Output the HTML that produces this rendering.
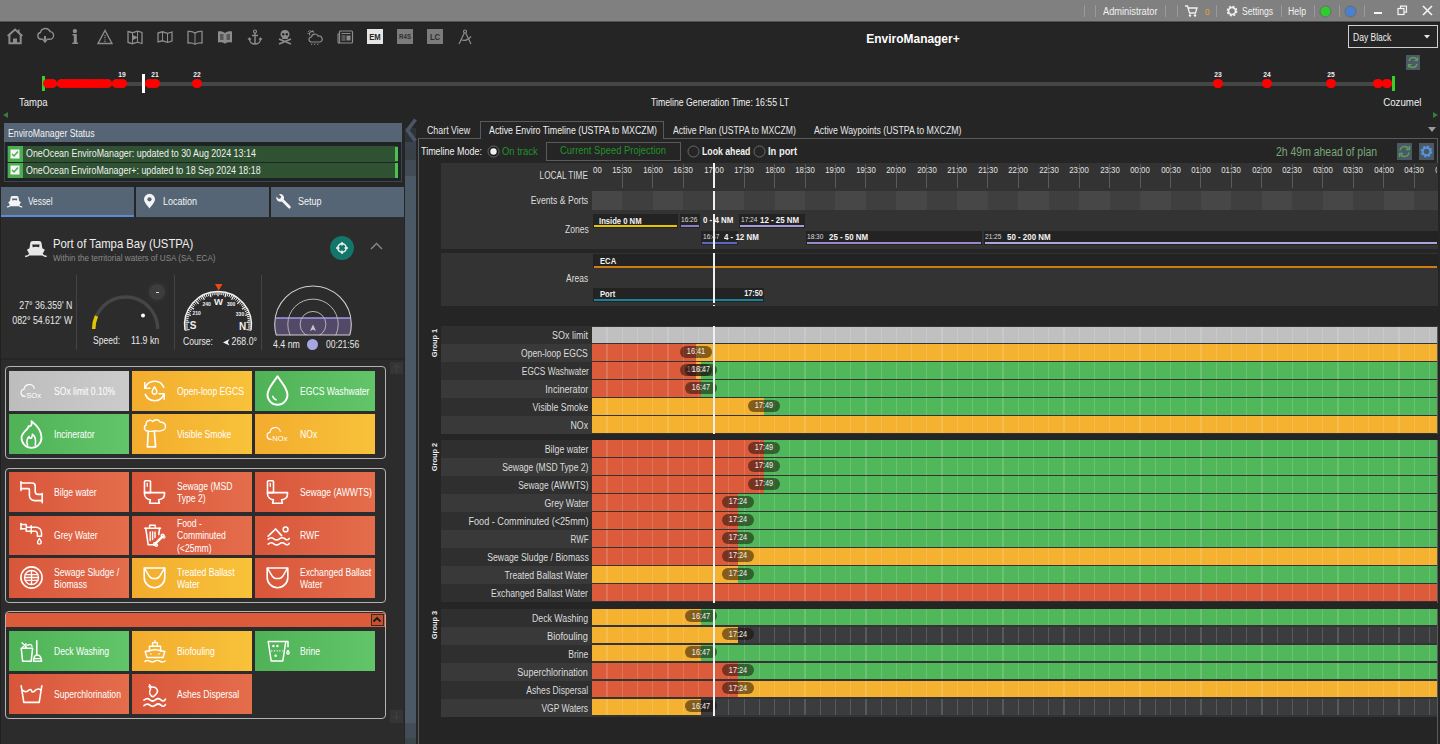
<!DOCTYPE html><html><head><meta charset="utf-8"><style>
html,body{margin:0;padding:0;width:1440px;height:744px;overflow:hidden;background:#252525;font-family:"Liberation Sans",sans-serif;}
.b{position:absolute;}
.t{position:absolute;white-space:nowrap;}
svg{overflow:visible}
</style></head><body>
<div class="b" style="left:0px;top:0px;width:1440px;height:21px;background:#808080;"></div>
<div class="b" style="left:0px;top:21px;width:1440px;height:1px;background:#545454;"></div>
<div class="b" style="left:0px;top:22px;width:1440px;height:1px;background:#1f1f1f;"></div>
<div class="b" style="left:1084px;top:5px;width:1px;height:12px;background:#9a9a9a;"></div>
<div class="b" style="left:1095px;top:5px;width:1px;height:12px;background:#9a9a9a;"></div>
<div class="b" style="left:1165px;top:5px;width:1px;height:12px;background:#9a9a9a;"></div>
<div class="b" style="left:1177px;top:5px;width:1px;height:12px;background:#9a9a9a;"></div>
<div class="b" style="left:1216px;top:5px;width:1px;height:12px;background:#9a9a9a;"></div>
<div class="b" style="left:1281px;top:5px;width:1px;height:12px;background:#9a9a9a;"></div>
<div class="b" style="left:1314px;top:5px;width:1px;height:12px;background:#9a9a9a;"></div>
<div class="b" style="left:1339px;top:5px;width:1px;height:12px;background:#9a9a9a;"></div>
<div class="b" style="left:1364px;top:5px;width:1px;height:12px;background:#9a9a9a;"></div>
<div class="t" style="left:1103px;top:4.5px;font-size:10px;line-height:14px;color:#f0f0f0;font-weight:400;transform-origin:left center;transform:scaleX(0.9252);">Administrator</div>
<div class="t" style="left:1205px;top:5.5px;font-size:9px;line-height:12px;color:#f0a030;font-weight:400;transform-origin:left center;transform:scaleX(0.9);">0</div>
<div class="t" style="left:1242px;top:4.5px;font-size:10px;line-height:14px;color:#f0f0f0;font-weight:400;transform-origin:left center;transform:scaleX(0.858);">Settings</div>
<div class="t" style="left:1288px;top:4.5px;font-size:10px;line-height:14px;color:#f0f0f0;font-weight:400;transform-origin:left center;transform:scaleX(0.8752);">Help</div>
<svg class="b" style="left:1184px;top:4px;" width="14" height="14" viewBox="0 0 14 14"><path d="M1 2h2.5l2 7h6l1.5-5H4.5" fill="none" stroke="#f0f0f0" stroke-width="1.3"/><circle cx="6" cy="11.5" r="1.2" fill="#f0f0f0"/><circle cx="11" cy="11.5" r="1.2" fill="#f0f0f0"/></svg>
<svg class="b" style="left:1225px;top:4px;" width="14" height="14" viewBox="0 0 14 14"><circle cx="7" cy="7" r="4.2" fill="none" stroke="#f0f0f0" stroke-width="2.4" stroke-dasharray="1.9 1.4"/><circle cx="7" cy="7" r="3.5" fill="none" stroke="#f0f0f0" stroke-width="1.6"/></svg>
<svg class="b" style="left:1319px;top:5px;" width="13" height="13" viewBox="0 0 13 13"><circle cx="6.5" cy="6.5" r="5.5" fill="#2ecc2e" stroke="#6a6a6a" stroke-width="1"/></svg>
<svg class="b" style="left:1344px;top:5px;" width="13" height="13" viewBox="0 0 13 13"><circle cx="6.5" cy="6.5" r="5.5" fill="#4a80d0" stroke="#6a6a6a" stroke-width="1"/></svg>
<div class="b" style="left:1374px;top:12px;width:8px;height:2px;background:#f4f4f4;"></div>
<svg class="b" style="left:1397px;top:5px;" width="11" height="11" viewBox="0 0 11 11"><rect x="1" y="3.5" width="6" height="6" fill="none" stroke="#f4f4f4" stroke-width="1.2"/><path d="M3.5 3.5V1.2h6v6H7" fill="none" stroke="#f4f4f4" stroke-width="1.2"/></svg>
<svg class="b" style="left:1422px;top:5px;" width="11" height="11" viewBox="0 0 11 11"><path d="M1 1L10 10M10 1L1 10" stroke="#f4f4f4" stroke-width="1.6"/></svg>
<svg class="b" style="left:4px;top:26px;" width="24" height="22" viewBox="0 0 24 22"><path d="M3.7 10L11.1 3.6L18.3 10" fill="none" stroke="#8c8c8c" stroke-width="2"/><path d="M5.4 9V17.2H16.7V9" fill="none" stroke="#8c8c8c" stroke-width="2"/><rect x="9" y="12.5" width="4" height="5" fill="#8c8c8c"/><path d="M14.8 3.6V7.2" stroke="#8c8c8c" stroke-width="1.5"/></svg>
<svg class="b" style="left:34px;top:26px;" width="22" height="22" viewBox="0 0 22 22"><path d="M9.5 13.2H7.2A3.4 3.4 0 0 1 6.4 6.5A5.2 5.2 0 0 1 16.2 5.6A3.5 3.5 0 0 1 15.4 13.2H12.5" fill="none" stroke="#8c8c8c" stroke-width="1.4"/><path d="M11 10v5" stroke="#8c8c8c" stroke-width="2"/><path d="M8.3 13.8L11 17.2L13.7 13.8z" fill="#8c8c8c"/></svg>
<svg class="b" style="left:68px;top:26px;" width="14" height="22" viewBox="0 0 14 22"><circle cx="6.9" cy="5.1" r="2.2" fill="#8c8c8c"/><path d="M4.5 8h4.3v8.6h1.2V18H4.3v-1.4h1.5V9.4H4.5z" fill="#8c8c8c"/></svg>
<svg class="b" style="left:97px;top:29px;" width="16" height="16" viewBox="0 0 16 16"><path d="M8 1.5L1 14.5h14z" fill="none" stroke="#8c8c8c" stroke-width="1.4"/><path d="M8 6v4.5" stroke="#8c8c8c" stroke-width="1.2" stroke-dasharray="1.3 .7"/><circle cx="8" cy="12.3" r=".8" fill="#8c8c8c"/></svg>
<svg class="b" style="left:127px;top:29px;" width="16" height="16" viewBox="0 0 16 16"><path d="M1 2.5l4.5 1.2 5-1.5 4.5 1.3v11l-4.5-1.3-5 1.5L1 13.5z" fill="none" stroke="#8c8c8c" stroke-width="1.3"/><path d="M5.5 3.7v10.6M10.5 2.2v10.6" stroke="#8c8c8c" stroke-width="1"/><path d="M5 5.5l6 3-6 3z" fill="#8c8c8c"/></svg>
<svg class="b" style="left:157px;top:29px;" width="16" height="16" viewBox="0 0 16 16"><path d="M1 4l4.5-1.2 5 1.5L15 3v9l-4.5 1.3-5-1.5L1 13z" fill="none" stroke="#8c8c8c" stroke-width="1.3"/><path d="M5.5 2.8v9M10.5 4.3v9" stroke="#8c8c8c" stroke-width="1"/></svg>
<svg class="b" style="left:187px;top:29px;" width="16" height="16" viewBox="0 0 16 16"><path d="M1 2.5c2.5-.5 5 0 7 1.5 2-1.5 4.5-2 7-1.5V14c-2.5-.5-5 0-7 1.2C6 14 3.5 13.5 1 14z" fill="none" stroke="#8c8c8c" stroke-width="1.3"/><path d="M8 4v11" stroke="#8c8c8c" stroke-width="1"/></svg>
<svg class="b" style="left:217px;top:29px;" width="16" height="16" viewBox="0 0 16 16"><path d="M1 2.5c2.5-.5 5 0 7 1.5 2-1.5 4.5-2 7-1.5V13.5c-2.5-.5-5 0-7 1.2C6 13.5 3.5 13 1 13.5z" fill="#8c8c8c"/><path d="M3 6h3.5M3 8h3.5M3 10h3.5M9.5 6H13M9.5 8H13M9.5 10H13" stroke="#252525" stroke-width="1"/></svg>
<svg class="b" style="left:248px;top:29px;" width="14" height="16" viewBox="0 0 14 16"><circle cx="7" cy="2.5" r="1.5" fill="none" stroke="#8c8c8c" stroke-width="1.2"/><path d="M7 4v11M4 6.5h6M1.5 10c0 3 2.5 5 5.5 5s5.5-2 5.5-5" fill="none" stroke="#8c8c8c" stroke-width="1.4"/><path d="M0 10.5l1.5-1.5 1.5 1.5M11 10.5l1.5-1.5 1.5 1.5" fill="none" stroke="#8c8c8c" stroke-width="1.2"/></svg>
<svg class="b" style="left:278px;top:29px;" width="14" height="16" viewBox="0 0 14 16"><path d="M7 1C4 1 2.5 3 2.5 5.3c0 1.5.8 2.6 1.7 3.2v1.5h5.6V8.5c.9-.6 1.7-1.7 1.7-3.2C11.5 3 10 1 7 1z" fill="#8c8c8c"/><circle cx="5.2" cy="5.2" r="1.2" fill="#252525"/><circle cx="8.8" cy="5.2" r="1.2" fill="#252525"/><path d="M1 10l12 5M13 10L1 15" stroke="#8c8c8c" stroke-width="1.8"/></svg>
<svg class="b" style="left:307px;top:29px;" width="16" height="16" viewBox="0 0 16 16"><path d="M4.5 13a2.5 2.5 0 0 1 0-5 3.5 3.5 0 0 1 6.7-.8A2.5 2.5 0 0 1 13 13z" fill="none" stroke="#8c8c8c" stroke-width="1.2"/><path d="M3 6.5a2.5 2.5 0 0 1 4-3" fill="none" stroke="#8c8c8c" stroke-width="1.1"/><path d="M3 1v1.2M0.5 4.5h1.2M1 2l1 .8M5.8 1.3l-.6 1" stroke="#8c8c8c" stroke-width="1"/><path d="M5 14.5l-.5 1.5M8 14.5l-.5 1.5M11 14.5l-.5 1.5" stroke="#8c8c8c" stroke-width="1"/></svg>
<svg class="b" style="left:337px;top:29px;" width="16" height="16" viewBox="0 0 16 16"><rect x="2.5" y="2" width="13" height="12" rx="1" fill="none" stroke="#8c8c8c" stroke-width="1.2"/><path d="M2.5 5H1v8a1 1 0 0 0 1.5 1" fill="none" stroke="#8c8c8c" stroke-width="1.1"/><path d="M4.5 4.5h9M4.5 7h4M4.5 9h4M4.5 11h4" stroke="#8c8c8c" stroke-width="1"/><rect x="9.5" y="6.5" width="4" height="5" fill="#8c8c8c"/></svg>
<div class="b" style="left:367px;top:29px;width:16px;height:15px;background:#e6e6e6;"></div>
<div class="t" style="left:375px;top:31.0px;font-size:9px;line-height:12px;color:#262626;font-weight:700;transform-origin:center center;transform:translateX(-50%) scaleX(0.85);">EM</div>
<div class="b" style="left:397px;top:29px;width:16px;height:15px;background:#7c7c7c;"></div>
<div class="t" style="left:405px;top:32.0px;font-size:7.5px;line-height:10px;color:#2e2e2e;font-weight:700;transform-origin:center center;transform:translateX(-50%) scaleX(0.82);">R4S</div>
<div class="b" style="left:427px;top:29px;width:16px;height:15px;background:#7c7c7c;"></div>
<div class="t" style="left:435px;top:31.0px;font-size:9px;line-height:12px;color:#2e2e2e;font-weight:700;transform-origin:center center;transform:translateX(-50%) scaleX(0.85);">LC</div>
<svg class="b" style="left:458px;top:29px;" width="14" height="16" viewBox="0 0 14 16"><circle cx="7" cy="2.5" r="1.5" fill="none" stroke="#8c8c8c" stroke-width="1.2"/><path d="M6.3 4L1 15M7.7 4L13 15M3 10.5c2.5 1.5 6 1.5 10-3" fill="none" stroke="#8c8c8c" stroke-width="1.2"/></svg>
<div class="t" style="left:912.5px;top:30.5px;font-size:12px;line-height:16px;color:#ffffff;font-weight:700;transform-origin:center center;transform:translateX(-50%) scaleX(0.9958);">EnviroManager+</div>
<div class="b" style="left:1348px;top:25px;width:88px;height:21px;background:transparent;border:1px solid #d0d0d0;"></div>
<div class="t" style="left:1353px;top:31.0px;font-size:10px;line-height:14px;color:#f0f0f0;font-weight:400;transform-origin:left center;transform:scaleX(0.8508);">Day Black</div>
<svg class="b" style="left:1424px;top:35px;" width="7" height="4" viewBox="0 0 7 4"><path d="M0 0h6l-3 3.5z" fill="#e8e8e8"/></svg>
<div class="b" style="left:1406px;top:55px;width:14px;height:15px;background:#4d5a66;"></div>
<svg class="b" style="left:1406px;top:55px;" width="14" height="15" viewBox="0 0 14 15"><path d="M3 6a4.3 4.3 0 0 1 7.8-1.5M11 9a4.3 4.3 0 0 1-7.8 1.5" fill="none" stroke="#5ea05e" stroke-width="1.4"/><path d="M11.5 2.5v3h-3M2.5 12.5v-3h3" fill="none" stroke="#5ea05e" stroke-width="1.2"/></svg>
<div class="b" style="left:44px;top:82px;width:1350px;height:4px;background:#454545;"></div>
<div class="b" style="left:42px;top:76px;width:3px;height:15px;background:#3ccc2c;"></div>
<div class="b" style="left:1392px;top:76px;width:3px;height:15px;background:#3ccc2c;"></div>
<div class="b" style="left:43.25px;top:78.75px;width:9.5px;height:9.5px;border-radius:50%;background:#ff0000"></div>
<div class="b" style="left:47.25px;top:78.75px;width:9.5px;height:9.5px;border-radius:50%;background:#ff0000"></div>
<div class="b" style="left:57.25px;top:78.75px;width:9.5px;height:9.5px;border-radius:50%;background:#ff0000"></div>
<div class="b" style="left:62.25px;top:78.75px;width:9.5px;height:9.5px;border-radius:50%;background:#ff0000"></div>
<div class="b" style="left:67.25px;top:78.75px;width:9.5px;height:9.5px;border-radius:50%;background:#ff0000"></div>
<div class="b" style="left:72.25px;top:78.75px;width:9.5px;height:9.5px;border-radius:50%;background:#ff0000"></div>
<div class="b" style="left:77.25px;top:78.75px;width:9.5px;height:9.5px;border-radius:50%;background:#ff0000"></div>
<div class="b" style="left:82.25px;top:78.75px;width:9.5px;height:9.5px;border-radius:50%;background:#ff0000"></div>
<div class="b" style="left:87.25px;top:78.75px;width:9.5px;height:9.5px;border-radius:50%;background:#ff0000"></div>
<div class="b" style="left:92.25px;top:78.75px;width:9.5px;height:9.5px;border-radius:50%;background:#ff0000"></div>
<div class="b" style="left:97.25px;top:78.75px;width:9.5px;height:9.5px;border-radius:50%;background:#ff0000"></div>
<div class="b" style="left:102.25px;top:78.75px;width:9.5px;height:9.5px;border-radius:50%;background:#ff0000"></div>
<div class="b" style="left:112.25px;top:78.75px;width:9.5px;height:9.5px;border-radius:50%;background:#ff0000"></div>
<div class="b" style="left:117.25px;top:78.75px;width:9.5px;height:9.5px;border-radius:50%;background:#ff0000"></div>
<div class="b" style="left:145.25px;top:78.75px;width:9.5px;height:9.5px;border-radius:50%;background:#ff0000"></div>
<div class="b" style="left:150.25px;top:78.75px;width:9.5px;height:9.5px;border-radius:50%;background:#ff0000"></div>
<div class="b" style="left:192.25px;top:78.75px;width:9.5px;height:9.5px;border-radius:50%;background:#ff0000"></div>
<div class="b" style="left:1213.25px;top:78.75px;width:9.5px;height:9.5px;border-radius:50%;background:#ff0000"></div>
<div class="b" style="left:1262.25px;top:78.75px;width:9.5px;height:9.5px;border-radius:50%;background:#ff0000"></div>
<div class="b" style="left:1326.25px;top:78.75px;width:9.5px;height:9.5px;border-radius:50%;background:#ff0000"></div>
<div class="b" style="left:1373.25px;top:78.75px;width:9.5px;height:9.5px;border-radius:50%;background:#ff0000"></div>
<div class="b" style="left:1382.25px;top:78.75px;width:9.5px;height:9.5px;border-radius:50%;background:#ff0000"></div>
<div class="b" style="left:142px;top:74px;width:3px;height:19px;background:#ffffff;"></div>
<div class="t" style="left:122px;top:70.0px;font-size:7px;line-height:9px;color:#f0f0f0;font-weight:700;transform-origin:center center;transform:translateX(-50%) scaleX(0.95);">19</div>
<div class="t" style="left:155px;top:70.0px;font-size:7px;line-height:9px;color:#f0f0f0;font-weight:700;transform-origin:center center;transform:translateX(-50%) scaleX(0.95);">21</div>
<div class="t" style="left:197px;top:70.0px;font-size:7px;line-height:9px;color:#f0f0f0;font-weight:700;transform-origin:center center;transform:translateX(-50%) scaleX(0.95);">22</div>
<div class="t" style="left:1218px;top:70.0px;font-size:7px;line-height:9px;color:#f0f0f0;font-weight:700;transform-origin:center center;transform:translateX(-50%) scaleX(0.95);">23</div>
<div class="t" style="left:1267px;top:70.0px;font-size:7px;line-height:9px;color:#f0f0f0;font-weight:700;transform-origin:center center;transform:translateX(-50%) scaleX(0.95);">24</div>
<div class="t" style="left:1331px;top:70.0px;font-size:7px;line-height:9px;color:#f0f0f0;font-weight:700;transform-origin:center center;transform:translateX(-50%) scaleX(0.95);">25</div>
<div class="t" style="left:19px;top:95.5px;font-size:10px;line-height:14px;color:#f0f0f0;font-weight:400;transform-origin:left center;transform:scaleX(0.9496);">Tampa</div>
<div class="t" style="right:19px;top:95.5px;font-size:10px;line-height:14px;color:#f0f0f0;font-weight:400;transform-origin:right center;transform:scaleX(0.9707);">Cozumel</div>
<div class="t" style="left:720px;top:95.5px;font-size:10px;line-height:14px;color:#f0f0f0;font-weight:400;transform-origin:center center;transform:translateX(-50%) scaleX(0.8712);">Timeline Generation Time: 16:55 LT</div>
<svg class="b" style="left:3px;top:112px;" width="6" height="7" viewBox="0 0 6 7"><path d="M5 0v6L0 3z" fill="#3a7a3a"/></svg>
<svg class="b" style="left:1433px;top:112px;" width="6" height="7" viewBox="0 0 6 7"><path d="M0 0v6l5-3z" fill="#3a7a3a"/></svg>
<div class="b" style="left:1px;top:217px;width:403px;height:527px;background:#2c2c2c;"></div>
<div class="b" style="left:0px;top:217px;width:1px;height:527px;background:#202020;"></div>
<div class="b" style="left:4px;top:123px;width:398px;height:59px;background:#1f2326;box-sizing:border-box;border:1px solid #3c4650;"></div>
<div class="b" style="left:4px;top:123px;width:398px;height:19px;background:#556576;"></div>
<div class="t" style="left:7.7px;top:126.5px;font-size:10px;line-height:14px;color:#f2f2f2;font-weight:400;transform-origin:left center;transform:scaleX(0.8743);">EnviroManager Status</div>
<div class="b" style="left:7px;top:146px;width:391px;height:15.5px;background:#2f5232;"></div>
<div class="b" style="left:7.5px;top:146px;width:15.5px;height:15.5px;background:#4cad50;"></div>
<div class="b" style="left:395px;top:146.5px;width:3px;height:14.5px;background:#4cc050;"></div>
<svg class="b" style="left:10px;top:148.5px;" width="10" height="10" viewBox="0 0 10 10"><rect x=".5" y=".5" width="9" height="9" fill="#f4f4f4"/><path d="M2 5l2 2 4-4.5" fill="none" stroke="#4cad50" stroke-width="1.4"/></svg>
<div class="t" style="left:26.2px;top:147.0px;font-size:10px;line-height:14px;color:#f0f0f0;font-weight:400;transform-origin:left center;transform:scaleX(0.889);">OneOcean EnviroManager: updated to 30 Aug 2024 13:14</div>
<div class="b" style="left:7px;top:162.5px;width:391px;height:15.5px;background:#2f5232;"></div>
<div class="b" style="left:7.5px;top:162.5px;width:15.5px;height:15.5px;background:#4cad50;"></div>
<div class="b" style="left:395px;top:163.0px;width:3px;height:14.5px;background:#4cc050;"></div>
<svg class="b" style="left:10px;top:165.0px;" width="10" height="10" viewBox="0 0 10 10"><rect x=".5" y=".5" width="9" height="9" fill="#f4f4f4"/><path d="M2 5l2 2 4-4.5" fill="none" stroke="#4cad50" stroke-width="1.4"/></svg>
<div class="t" style="left:26.2px;top:163.5px;font-size:10px;line-height:14px;color:#f0f0f0;font-weight:400;transform-origin:left center;transform:scaleX(0.8856);">OneOcean EnviroManager+: updated to 18 Sep 2024 18:18</div>
<div class="b" style="left:1px;top:187px;width:133px;height:30px;background:#556576;"></div>
<div class="b" style="left:136px;top:187px;width:133px;height:30px;background:#556576;"></div>
<div class="b" style="left:271px;top:187px;width:133px;height:30px;background:#556576;"></div>
<div class="b" style="left:1px;top:214.5px;width:133px;height:2.5px;background:#5b8ad8;"></div>
<svg class="b" style="left:6.8px;top:194.5px;" width="15.2" height="13" viewBox="0 0 22 18"><path d="M5 4.5Q5 1 8 1H14Q17 1 17 4.5L17.6 8.4L20.2 10L17 16H5L1.8 10L4.4 8.4Z" fill="#f4f4f4"/><path d="M7.2 4.6H14.8L14.3 7.4Q11 6.6 7.7 7.4Z" fill="#556576"/><path d="M.6 16.8Q3.2 16.8 5.2 14.2M21.4 16.8Q18.8 16.8 16.8 14.2" fill="none" stroke="#f4f4f4" stroke-width="1.7" stroke-linecap="round"/></svg>
<div class="t" style="left:27.6px;top:195.0px;font-size:10px;line-height:14px;color:#f4f4f4;font-weight:400;transform-origin:left center;transform:scaleX(0.835);">Vessel</div>
<svg class="b" style="left:143px;top:194px;" width="13" height="15" viewBox="0 0 13 15"><path d="M6.5 14.5C3 10 1 7.5 1 5.3a5.5 5.5 0 0 1 11 0c0 2.2-2 4.7-5.5 9.2z" fill="#f4f4f4"/><circle cx="6.5" cy="5.3" r="2.1" fill="#556576"/></svg>
<div class="t" style="left:163px;top:195.0px;font-size:10px;line-height:14px;color:#f4f4f4;font-weight:400;transform-origin:left center;transform:scaleX(0.8994);">Location</div>
<svg class="b" style="left:276px;top:193px;" width="16" height="16" viewBox="0 0 16 16"><path d="M14.5 13.2L7.8 6.5a4 4 0 0 0-4.9-5.3l2.3 2.3-.6 1.8-1.8.6-2.3-2.3a4 4 0 0 0 5.3 4.9l6.7 6.7a1.3 1.3 0 0 0 1.8-2z" fill="#f4f4f4"/></svg>
<div class="t" style="left:297.6px;top:195.0px;font-size:10px;line-height:14px;color:#f4f4f4;font-weight:400;transform-origin:left center;transform:scaleX(0.8955);">Setup</div>
<div class="b" style="left:1px;top:358px;width:403px;height:2px;background:#262626;"></div>
<svg class="b" style="left:25.2px;top:239.5px;" width="21.8" height="17.5" viewBox="0 0 22 18"><path d="M5 4.5Q5 1 8 1H14Q17 1 17 4.5L17.6 8.4L20.2 10L17 16H5L1.8 10L4.4 8.4Z" fill="#e8e8e8"/><path d="M7.2 4.6H14.8L14.3 7.4Q11 6.6 7.7 7.4Z" fill="#2c2c2c"/><path d="M.6 16.8Q3.2 16.8 5.2 14.2M21.4 16.8Q18.8 16.8 16.8 14.2" fill="none" stroke="#e8e8e8" stroke-width="1.7" stroke-linecap="round"/></svg>
<div class="t" style="left:52.7px;top:234.5px;font-size:13px;line-height:18px;color:#eeeeee;font-weight:400;transform-origin:left center;transform:scaleX(0.8696);">Port of Tampa Bay (USTPA)</div>
<div class="t" style="left:52.7px;top:252.0px;font-size:9px;line-height:12px;color:#8a8a8a;font-weight:400;transform-origin:left center;transform:scaleX(0.8975);">Within the territorial waters of USA (SA, ECA)</div>
<div class="b" style="left:330px;top:236px;width:24px;height:24px;border-radius:50%;background:#13766a"></div>
<svg class="b" style="left:334px;top:240px;" width="16" height="16" viewBox="0 0 16 16"><circle cx="8" cy="8" r="4.2" fill="none" stroke="#f4f4f4" stroke-width="1.5"/><path d="M8 2v3.5M8 10.5V14M2 8h3.5M10.5 8H14" stroke="#f4f4f4" stroke-width="1.5"/></svg>
<svg class="b" style="left:370px;top:242px;" width="13" height="8" viewBox="0 0 13 8"><path d="M1 7l5.5-5.5L12 7" fill="none" stroke="#8a8a8a" stroke-width="1.4"/></svg>
<div class="b" style="left:76px;top:275px;width:1px;height:75px;background:#444444;"></div>
<div class="b" style="left:174px;top:275px;width:1px;height:75px;background:#444444;"></div>
<div class="b" style="left:261px;top:275px;width:1px;height:75px;background:#444444;"></div>
<div class="t" style="right:1367.5px;top:298.5px;font-size:10px;line-height:14px;color:#e8e8e8;font-weight:400;transform-origin:right center;transform:scaleX(0.8793);">27° 36.359&#x27; N</div>
<div class="t" style="right:1367.5px;top:313.5px;font-size:10px;line-height:14px;color:#e8e8e8;font-weight:400;transform-origin:right center;transform:scaleX(0.8787);">082° 54.612&#x27; W</div>
<svg class="b" style="left:84px;top:286px;" width="84" height="50" viewBox="0 0 84 50"><path d="M9.7 43A32 32 0 0 1 73.7 43" fill="none" stroke="#464646" stroke-width="3.5"/><path d="M9.7 43A32 32 0 0 1 12.47 30" fill="none" stroke="#e6c400" stroke-width="3.5"/><circle cx="59" cy="29.5" r="2" fill="#ffffff"/></svg>
<div class="b" style="left:149px;top:284px;width:16px;height:16px;border-radius:50%;background:#3d3d3d;box-shadow:0 0 0 3px #2f2f2f"></div>
<div class="b" style="left:155.5px;top:291.5px;width:3.5px;height:1.5px;background:#d8d8d8;"></div>
<div class="t" style="left:92.6px;top:333.5px;font-size:10px;line-height:14px;color:#e8e8e8;font-weight:400;transform-origin:left center;transform:scaleX(0.8519);">Speed:</div>
<div class="t" style="left:130.8px;top:333.5px;font-size:10px;line-height:14px;color:#e8e8e8;font-weight:400;transform-origin:left center;transform:scaleX(0.8797);">11.9 kn</div>
<svg class="b" style="left:184px;top:290px;" width="68" height="44" viewBox="0 0 68 44"><path d="M0.91 40.24A33.5 33.5 0 1 1 67.09 40.24" fill="none" stroke="#f0f0f0" stroke-width="1.3"/><line x1="0.91" y1="40.24" x2="5.65" y2="39.49" stroke="#f4f4f4" stroke-width="1.2"/><line x1="0.65" y1="38.19" x2="4.04" y2="37.87" stroke="#f4f4f4" stroke-width="1.0"/><line x1="0.52" y1="36.13" x2="3.92" y2="36.01" stroke="#f4f4f4" stroke-width="1.0"/><line x1="0.51" y1="34.06" x2="3.91" y2="34.16" stroke="#f4f4f4" stroke-width="1.0"/><line x1="0.63" y1="32.00" x2="5.42" y2="32.43" stroke="#f4f4f4" stroke-width="1.2"/><line x1="0.88" y1="29.95" x2="4.24" y2="30.46" stroke="#f4f4f4" stroke-width="1.0"/><line x1="1.26" y1="27.91" x2="4.58" y2="28.63" stroke="#f4f4f4" stroke-width="1.0"/><line x1="1.76" y1="25.91" x2="5.03" y2="26.83" stroke="#f4f4f4" stroke-width="1.0"/><line x1="2.38" y1="23.94" x2="6.91" y2="25.52" stroke="#f4f4f4" stroke-width="1.2"/><line x1="3.12" y1="22.01" x2="6.26" y2="23.33" stroke="#f4f4f4" stroke-width="1.0"/><line x1="3.98" y1="20.13" x2="7.03" y2="21.64" stroke="#f4f4f4" stroke-width="1.0"/><line x1="4.96" y1="18.30" x2="7.90" y2="20.00" stroke="#f4f4f4" stroke-width="1.0"/><line x1="6.04" y1="16.54" x2="10.05" y2="19.19" stroke="#f4f4f4" stroke-width="1.2"/><line x1="7.23" y1="14.86" x2="9.95" y2="16.90" stroke="#f4f4f4" stroke-width="1.0"/><line x1="8.53" y1="13.24" x2="11.11" y2="15.45" stroke="#f4f4f4" stroke-width="1.0"/><line x1="9.92" y1="11.71" x2="12.36" y2="14.08" stroke="#f4f4f4" stroke-width="1.0"/><line x1="11.40" y1="10.27" x2="14.64" y2="13.82" stroke="#f4f4f4" stroke-width="1.2"/><line x1="12.97" y1="8.93" x2="15.10" y2="11.57" stroke="#f4f4f4" stroke-width="1.0"/><line x1="14.61" y1="7.68" x2="16.58" y2="10.45" stroke="#f4f4f4" stroke-width="1.0"/><line x1="16.34" y1="6.54" x2="18.13" y2="9.42" stroke="#f4f4f4" stroke-width="1.0"/><line x1="18.13" y1="5.50" x2="20.40" y2="9.73" stroke="#f4f4f4" stroke-width="1.2"/><line x1="19.97" y1="4.58" x2="21.40" y2="7.66" stroke="#f4f4f4" stroke-width="1.0"/><line x1="21.88" y1="3.77" x2="23.11" y2="6.94" stroke="#f4f4f4" stroke-width="1.0"/><line x1="23.83" y1="3.08" x2="24.86" y2="6.32" stroke="#f4f4f4" stroke-width="1.0"/><line x1="25.81" y1="2.52" x2="26.99" y2="7.17" stroke="#f4f4f4" stroke-width="1.2"/><line x1="27.83" y1="2.07" x2="28.46" y2="5.41" stroke="#f4f4f4" stroke-width="1.0"/><line x1="29.88" y1="1.75" x2="30.29" y2="5.13" stroke="#f4f4f4" stroke-width="1.0"/><line x1="31.93" y1="1.56" x2="32.14" y2="4.96" stroke="#f4f4f4" stroke-width="1.0"/><line x1="34.00" y1="1.50" x2="34.00" y2="6.30" stroke="#f4f4f4" stroke-width="1.2"/><line x1="36.07" y1="1.56" x2="35.86" y2="4.96" stroke="#f4f4f4" stroke-width="1.0"/><line x1="38.12" y1="1.75" x2="37.71" y2="5.13" stroke="#f4f4f4" stroke-width="1.0"/><line x1="40.17" y1="2.07" x2="39.54" y2="5.41" stroke="#f4f4f4" stroke-width="1.0"/><line x1="42.19" y1="2.52" x2="41.01" y2="7.17" stroke="#f4f4f4" stroke-width="1.2"/><line x1="44.17" y1="3.08" x2="43.14" y2="6.32" stroke="#f4f4f4" stroke-width="1.0"/><line x1="46.12" y1="3.77" x2="44.89" y2="6.94" stroke="#f4f4f4" stroke-width="1.0"/><line x1="48.03" y1="4.58" x2="46.60" y2="7.66" stroke="#f4f4f4" stroke-width="1.0"/><line x1="49.87" y1="5.50" x2="47.60" y2="9.73" stroke="#f4f4f4" stroke-width="1.2"/><line x1="51.66" y1="6.54" x2="49.87" y2="9.42" stroke="#f4f4f4" stroke-width="1.0"/><line x1="53.39" y1="7.68" x2="51.42" y2="10.45" stroke="#f4f4f4" stroke-width="1.0"/><line x1="55.03" y1="8.93" x2="52.90" y2="11.57" stroke="#f4f4f4" stroke-width="1.0"/><line x1="56.60" y1="10.27" x2="53.36" y2="13.82" stroke="#f4f4f4" stroke-width="1.2"/><line x1="58.08" y1="11.71" x2="55.64" y2="14.08" stroke="#f4f4f4" stroke-width="1.0"/><line x1="59.47" y1="13.24" x2="56.89" y2="15.45" stroke="#f4f4f4" stroke-width="1.0"/><line x1="60.77" y1="14.86" x2="58.05" y2="16.90" stroke="#f4f4f4" stroke-width="1.0"/><line x1="61.96" y1="16.54" x2="57.95" y2="19.19" stroke="#f4f4f4" stroke-width="1.2"/><line x1="63.04" y1="18.30" x2="60.10" y2="20.00" stroke="#f4f4f4" stroke-width="1.0"/><line x1="64.02" y1="20.13" x2="60.97" y2="21.64" stroke="#f4f4f4" stroke-width="1.0"/><line x1="64.88" y1="22.01" x2="61.74" y2="23.33" stroke="#f4f4f4" stroke-width="1.0"/><line x1="65.62" y1="23.94" x2="61.09" y2="25.52" stroke="#f4f4f4" stroke-width="1.2"/><line x1="66.24" y1="25.91" x2="62.97" y2="26.83" stroke="#f4f4f4" stroke-width="1.0"/><line x1="66.74" y1="27.91" x2="63.42" y2="28.63" stroke="#f4f4f4" stroke-width="1.0"/><line x1="67.12" y1="29.95" x2="63.76" y2="30.46" stroke="#f4f4f4" stroke-width="1.0"/><line x1="67.37" y1="32.00" x2="62.58" y2="32.43" stroke="#f4f4f4" stroke-width="1.2"/><line x1="67.49" y1="34.06" x2="64.09" y2="34.16" stroke="#f4f4f4" stroke-width="1.0"/><line x1="67.48" y1="36.13" x2="64.08" y2="36.01" stroke="#f4f4f4" stroke-width="1.0"/><line x1="67.35" y1="38.19" x2="63.96" y2="37.87" stroke="#f4f4f4" stroke-width="1.0"/><line x1="67.09" y1="40.24" x2="62.35" y2="39.49" stroke="#f4f4f4" stroke-width="1.2"/><text x="34.6" y="11.8" font-family="Liberation Sans" font-weight="700" font-size="9.5" fill="#f0f0f0" text-anchor="middle" dominant-baseline="central">W</text><text x="9" y="35.6" font-family="Liberation Sans" font-weight="700" font-size="10" fill="#f0f0f0" text-anchor="middle" dominant-baseline="central">S</text><text x="58.5" y="36.7" font-family="Liberation Sans" font-weight="700" font-size="10" fill="#f0f0f0" text-anchor="middle" dominant-baseline="central">N</text><text x="22.7" y="14.1" font-family="Liberation Sans" font-weight="700" font-size="5" fill="#f0f0f0" text-anchor="middle" dominant-baseline="central">240</text><text x="47.2" y="14.1" font-family="Liberation Sans" font-weight="700" font-size="5" fill="#f0f0f0" text-anchor="middle" dominant-baseline="central">300</text><text x="12.7" y="22.6" font-family="Liberation Sans" font-weight="700" font-size="5" fill="#f0f0f0" text-anchor="middle" dominant-baseline="central">210</text><text x="56" y="23.7" font-family="Liberation Sans" font-weight="700" font-size="5" fill="#f0f0f0" text-anchor="middle" dominant-baseline="central">330</text></svg>
<svg class="b" style="left:214.5px;top:284px;" width="8" height="7" viewBox="0 0 8 7"><path d="M0 0h7.5l-3.75 6.5z" fill="#f04810"/></svg>
<div class="t" style="left:183px;top:335.0px;font-size:10px;line-height:14px;color:#e8e8e8;font-weight:400;transform-origin:left center;transform:scaleX(0.8568);">Course:</div>
<svg class="b" style="left:222.5px;top:339px;" width="6.5" height="6.5" viewBox="0 0 6.5 6.5"><path d="M6.5 0L0 3.4 6.5 6.5 4.8 3.4z" fill="#f0f0f0"/></svg>
<div class="t" style="right:1182.5px;top:335.0px;font-size:10px;line-height:14px;color:#e8e8e8;font-weight:400;transform-origin:right center;transform:scaleX(0.8752);">268.0°</div>
<svg class="b" style="left:273px;top:283.8px;" width="80" height="53" viewBox="0 0 80 53"><defs><clipPath id="rc"><circle cx="40" cy="40.3" r="38.3"/></clipPath><clipPath id="rb"><rect x="-2" y="-2" width="84" height="53.2"/></clipPath></defs><rect x="0" y="34" width="80" height="17" fill="#524868" clip-path="url(#rc)"/><path d="M2 34h76" stroke="#a09ae8" stroke-width="1.3" clip-path="url(#rc)"/><g clip-path="url(#rb)"><circle cx="40" cy="40.3" r="38.3" fill="none" stroke="#cfcfcf" stroke-width="1.1"/><circle cx="40" cy="40.3" r="25.2" fill="none" stroke="#b4b4b4" stroke-width="1"/><circle cx="40" cy="40.3" r="12.9" fill="none" stroke="#b4b4b4" stroke-width="1"/></g><path d="M3.2 51H76.8" stroke="#cfcfcf" stroke-width="1.1"/><path d="M40 40.5l-3 6.5 3-1.5 3 1.5z" fill="#c8c8c8"/></svg>
<div class="t" style="left:272.6px;top:337.5px;font-size:10px;line-height:14px;color:#e8e8e8;font-weight:400;transform-origin:left center;transform:scaleX(0.88);">4.4 nm</div>
<div class="b" style="left:307px;top:339px;width:11px;height:11px;border-radius:50%;background:#a6a6e2"></div>
<div class="t" style="left:325.8px;top:337.5px;font-size:10px;line-height:14px;color:#e8e8e8;font-weight:400;transform-origin:left center;transform:scaleX(0.853);">00:21:56</div>
<div class="b" style="left:4.5px;top:365.5px;width:381.5px;height:93px;background:transparent;box-sizing:border-box;border:1.5px solid #b4b4b4;border-radius:4px;"></div>
<div class="b" style="left:9px;top:370.5px;width:120px;height:40px;background:linear-gradient(90deg,#bdbdbd,#cbcbcb);"></div>
<svg class="b" style="left:20.3px;top:383.7px;" width="23" height="14" viewBox="0 0 23 14"><path d="M5 12.2A3.3 3.3 0 0 1 4 5.4A5.3 5.3 0 0 1 14.3 4.2" fill="none" stroke="#ffffff" stroke-width="1.1" stroke-linecap="round" stroke-linejoin="round"/><path d="M3.8 12.2H5" fill="none" stroke="#ffffff" stroke-width="1.1" stroke-linecap="round" stroke-linejoin="round"/><text x="6.3" y="13.6" font-family="Liberation Sans" font-size="7.6" fill="#ffffff">SOx</text></svg>
<div class="t" style="left:54px;top:384.7px;font-size:10px;line-height:14px;color:#ffffff;font-weight:400;transform-origin:left center;transform:scaleX(0.86);">SOx limit 0.10%</div>
<div class="b" style="left:132px;top:370.5px;width:120px;height:40px;background:linear-gradient(90deg,#f3ac2e,#f8c23a);"></div>
<svg class="b" style="left:143.4px;top:378.5px;" width="23" height="24" viewBox="0 0 23 24"><path d="M2.3 8.6A10 10 0 0 1 20.7 8.2" fill="none" stroke="#ffffff" stroke-width="1.6" stroke-linecap="round" stroke-linejoin="round"/><path d="M1.8 3.8V9.2H7" fill="none" stroke="#ffffff" stroke-width="1.6" stroke-linecap="round" stroke-linejoin="round"/><path d="M20.7 15.8A10 10 0 0 1 2.3 15.4" fill="none" stroke="#ffffff" stroke-width="1.6" stroke-linecap="round" stroke-linejoin="round"/><path d="M21.2 20.2V14.8H16" fill="none" stroke="#ffffff" stroke-width="1.6" stroke-linecap="round" stroke-linejoin="round"/><path d="M11.5 7.8C10.2 9.8 9.1 11.2 9.1 12.8a2.4 2.4 0 0 0 4.8 0C13.9 11.2 12.8 9.8 11.5 7.8z" fill="none" stroke="#ffffff" stroke-width="1.4" stroke-linecap="round" stroke-linejoin="round"/></svg>
<div class="t" style="left:177px;top:384.7px;font-size:10px;line-height:14px;color:#ffffff;font-weight:400;transform-origin:left center;transform:scaleX(0.86);">Open-loop EGCS</div>
<div class="b" style="left:255px;top:370.5px;width:120px;height:40px;background:linear-gradient(90deg,#4fb257,#62c56a);"></div>
<svg class="b" style="left:266.0px;top:375.2px;" width="23" height="31" viewBox="0 0 23 31"><path d="M11.5 1.2C7.5 7.5 1.5 13.5 1.5 19.8a10 10 0 0 0 20 0C21.5 13.5 15.5 7.5 11.5 1.2z" fill="none" stroke="#ffffff" stroke-width="1.9" stroke-linecap="round" stroke-linejoin="round"/><path d="M6.8 21.5a5.5 5.5 0 0 0 3.2 3.3" fill="none" stroke="#ffffff" stroke-width="1.7" stroke-linecap="round" stroke-linejoin="round"/></svg>
<div class="t" style="left:300px;top:384.7px;font-size:10px;line-height:14px;color:#ffffff;font-weight:400;transform-origin:left center;transform:scaleX(0.86);">EGCS Washwater</div>
<div class="b" style="left:9px;top:413.5px;width:120px;height:40px;background:linear-gradient(90deg,#4fb257,#62c56a);"></div>
<svg class="b" style="left:20.3px;top:419.9px;" width="23" height="28" viewBox="0 0 23 28"><path d="M11.5 1.2C12.3 4.8 10.8 6.8 8.6 6.2C8.8 9.2 1.5 12.5 1.5 17.8a10 10 0 0 0 20 0C21.5 11 16.5 5 11.5 1.2z" fill="none" stroke="#ffffff" stroke-width="1.8" stroke-linecap="round" stroke-linejoin="round"/><path d="M7.6 25C6.2 21.8 7.2 18.6 9 16.6C9.4 18.4 10.5 18.8 11.6 17.6C12.2 16.4 12.5 15.4 12.4 14.2C15 16.3 16.2 20 15.2 25" fill="none" stroke="#ffffff" stroke-width="1.6" stroke-linecap="round" stroke-linejoin="round"/></svg>
<div class="t" style="left:54px;top:427.7px;font-size:10px;line-height:14px;color:#ffffff;font-weight:400;transform-origin:left center;transform:scaleX(0.86);">Incinerator</div>
<div class="b" style="left:132px;top:413.5px;width:120px;height:40px;background:linear-gradient(90deg,#f3ac2e,#f8c23a);"></div>
<svg class="b" style="left:143.4px;top:418.3px;" width="23" height="30" viewBox="0 0 23 30"><path d="M4.5 13A3.3 3.3 0 0 1 3.2 6.8A3.8 3.8 0 0 1 9.8 3.6A4.4 4.4 0 0 1 17.5 4.4A3.6 3.6 0 0 1 19.3 12.4Q16 13.8 12.5 12.6Q8.5 14 4.5 13z" fill="none" stroke="#ffffff" stroke-width="1.4" stroke-linecap="round" stroke-linejoin="round"/><path d="M5.2 14L4.4 28.8H12.6L11.4 14" fill="none" stroke="#ffffff" stroke-width="1.7" stroke-linecap="round" stroke-linejoin="round"/></svg>
<div class="t" style="left:177px;top:427.7px;font-size:10px;line-height:14px;color:#ffffff;font-weight:400;transform-origin:left center;transform:scaleX(0.86);">Visible Smoke</div>
<div class="b" style="left:255px;top:413.5px;width:120px;height:40px;background:linear-gradient(90deg,#f3ac2e,#f8c23a);"></div>
<svg class="b" style="left:265.8px;top:426.7px;" width="23" height="14" viewBox="0 0 23 14"><path d="M5 12.2A3.3 3.3 0 0 1 4 5.4A5.3 5.3 0 0 1 14.3 4.2" fill="none" stroke="#ffffff" stroke-width="1.1" stroke-linecap="round" stroke-linejoin="round"/><path d="M3.8 12.2H5" fill="none" stroke="#ffffff" stroke-width="1.1" stroke-linecap="round" stroke-linejoin="round"/><text x="6.3" y="13.6" font-family="Liberation Sans" font-size="7.6" fill="#ffffff">NOx</text></svg>
<div class="t" style="left:300px;top:427.7px;font-size:10px;line-height:14px;color:#ffffff;font-weight:400;transform-origin:left center;transform:scaleX(0.86);">NOx</div>
<div class="b" style="left:4.5px;top:467.5px;width:381.5px;height:135.5px;background:transparent;box-sizing:border-box;border:1.5px solid #b4b4b4;border-radius:4px;"></div>
<div class="b" style="left:9px;top:472px;width:120px;height:39.5px;background:linear-gradient(90deg,#d8563a,#e46d4c);"></div>
<svg class="b" style="left:20.0px;top:480.75px;" width="23" height="23" viewBox="0 0 23 23"><path d="M1 0.8V9.4" fill="none" stroke="#ffffff" stroke-width="1.6" stroke-linecap="round" stroke-linejoin="round"/><path d="M22.2 12.5V21.8" fill="none" stroke="#ffffff" stroke-width="1.6" stroke-linecap="round" stroke-linejoin="round"/><path d="M1 2H12A3.2 3.2 0 0 1 15.2 5.2V10.6A2.8 2.8 0 0 0 18 13.4H22.2" fill="none" stroke="#ffffff" stroke-width="1.6" stroke-linecap="round" stroke-linejoin="round"/><path d="M1 7.6H8.4A1 1 0 0 1 9.4 8.6V14.4A5.2 5.2 0 0 0 14.6 19.6H22.2" fill="none" stroke="#ffffff" stroke-width="1.6" stroke-linecap="round" stroke-linejoin="round"/></svg>
<div class="t" style="left:54px;top:485.95px;font-size:10px;line-height:14px;color:#ffffff;font-weight:400;transform-origin:left center;transform:scaleX(0.86);">Bilge water</div>
<div class="b" style="left:132px;top:472px;width:120px;height:39.5px;background:linear-gradient(90deg,#d8563a,#e46d4c);"></div>
<svg class="b" style="left:143.4px;top:479.65px;" width="23" height="24" viewBox="0 0 23 24"><path d="M1.5 1.8A1 1 0 0 1 2.5 .8H6.5A1 1 0 0 1 7.5 1.8V12.6H1.5Z" fill="none" stroke="#ffffff" stroke-width="1.6" stroke-linecap="round" stroke-linejoin="round"/><path d="M4.3 3.5V6.2" fill="none" stroke="#ffffff" stroke-width="1.4" stroke-linecap="round" stroke-linejoin="round"/><path d="M1.5 12.6H21.5V14C21.5 17.4 18.6 19.4 15.6 19.8L16.4 23.2H6.6L7.4 19.8C4.2 19.3 1.5 17 1.5 14Z" fill="none" stroke="#ffffff" stroke-width="1.6" stroke-linecap="round" stroke-linejoin="round"/></svg>
<div class="t" style="left:177px;top:479.84999999999997px;font-size:10px;line-height:14px;color:#ffffff;font-weight:400;transform-origin:left center;transform:scaleX(0.86);">Sewage (MSD</div>
<div class="t" style="left:177px;top:492.04999999999995px;font-size:10px;line-height:14px;color:#ffffff;font-weight:400;transform-origin:left center;transform:scaleX(0.86);">Type 2)</div>
<div class="b" style="left:255px;top:472px;width:120px;height:39.5px;background:linear-gradient(90deg,#d8563a,#e46d4c);"></div>
<svg class="b" style="left:266.4px;top:479.65px;" width="23" height="24" viewBox="0 0 23 24"><path d="M1.5 1.8A1 1 0 0 1 2.5 .8H6.5A1 1 0 0 1 7.5 1.8V12.6H1.5Z" fill="none" stroke="#ffffff" stroke-width="1.6" stroke-linecap="round" stroke-linejoin="round"/><path d="M4.3 3.5V6.2" fill="none" stroke="#ffffff" stroke-width="1.4" stroke-linecap="round" stroke-linejoin="round"/><path d="M1.5 12.6H21.5V14C21.5 17.4 18.6 19.4 15.6 19.8L16.4 23.2H6.6L7.4 19.8C4.2 19.3 1.5 17 1.5 14Z" fill="none" stroke="#ffffff" stroke-width="1.6" stroke-linecap="round" stroke-linejoin="round"/></svg>
<div class="t" style="left:300px;top:485.95px;font-size:10px;line-height:14px;color:#ffffff;font-weight:400;transform-origin:left center;transform:scaleX(0.86);">Sewage (AWWTS)</div>
<div class="b" style="left:9px;top:515.5px;width:120px;height:39.5px;background:linear-gradient(90deg,#d8563a,#e46d4c);"></div>
<svg class="b" style="left:20.0px;top:523.25px;" width="23" height="23" viewBox="0 0 23 23"><path d="M1 .6V6.2" fill="none" stroke="#ffffff" stroke-width="1.6" stroke-linecap="round" stroke-linejoin="round"/><path d="M1 1.6H6.2V4.2H16A5.5 5.5 0 0 1 21.5 9.7V13.2H17.4V10.5A2.2 2.2 0 0 0 15.2 8.3H6.2V5.8H1" fill="none" stroke="#ffffff" stroke-width="1.5" stroke-linecap="round" stroke-linejoin="round"/><path d="M11.2 2.6V10.2" fill="none" stroke="#ffffff" stroke-width="1.4" stroke-linecap="round" stroke-linejoin="round"/><path d="M19.4 15.6C18.4 17 17.6 18.1 17.6 19.3a1.8 1.8 0 0 0 3.6 0C21.2 18.1 20.4 17 19.4 15.6z" fill="none" stroke="#ffffff" stroke-width="1.4" stroke-linecap="round" stroke-linejoin="round"/></svg>
<div class="t" style="left:54px;top:529.45px;font-size:10px;line-height:14px;color:#ffffff;font-weight:400;transform-origin:left center;transform:scaleX(0.86);">Grey Water</div>
<div class="b" style="left:132px;top:515.5px;width:120px;height:39.5px;background:linear-gradient(90deg,#d8563a,#e46d4c);"></div>
<svg class="b" style="left:143.9px;top:524.35px;" width="23" height="22" viewBox="0 0 23 22"><path d="M.8 4.2H16.6" fill="none" stroke="#ffffff" stroke-width="1.6" stroke-linecap="round" stroke-linejoin="round"/><path d="M5.6 4.2V1.2H11.2V4.2" fill="none" stroke="#ffffff" stroke-width="1.4" stroke-linecap="round" stroke-linejoin="round"/><path d="M1.8 4.4L4.2 20.8H11.2M15.6 4.4L14.8 10.5" fill="none" stroke="#ffffff" stroke-width="1.6" stroke-linecap="round" stroke-linejoin="round"/><path d="M6.2 8V16.5M8.6 8V15.5M11 8V13.5" fill="none" stroke="#ffffff" stroke-width="1.4" stroke-linecap="round" stroke-linejoin="round"/><path d="M11.6 19.4L18.4 12.6" fill="none" stroke="#ffffff" stroke-width="2.4" stroke-linecap="round" stroke-linejoin="round"/><circle cx="11" cy="20.2" r="1.5" fill="none" stroke="#ffffff" stroke-width="1.2"/><circle cx="12.4" cy="21.2" r="1.2" fill="none" stroke="#ffffff" stroke-width="1.1"/><circle cx="18.6" cy="11.6" r="1.5" fill="none" stroke="#ffffff" stroke-width="1.2"/><circle cx="19.8" cy="13" r="1.2" fill="none" stroke="#ffffff" stroke-width="1.1"/></svg>
<div class="t" style="left:177px;top:517.25px;font-size:10px;line-height:14px;color:#ffffff;font-weight:400;transform-origin:left center;transform:scaleX(0.86);">Food -</div>
<div class="t" style="left:177px;top:529.45px;font-size:10px;line-height:14px;color:#ffffff;font-weight:400;transform-origin:left center;transform:scaleX(0.86);">Comminuted</div>
<div class="t" style="left:177px;top:541.65px;font-size:10px;line-height:14px;color:#ffffff;font-weight:400;transform-origin:left center;transform:scaleX(0.86);">(&lt;25mm)</div>
<div class="b" style="left:255px;top:515.5px;width:120px;height:39.5px;background:linear-gradient(90deg,#d8563a,#e46d4c);"></div>
<svg class="b" style="left:266.9px;top:525.65px;" width="23" height="19" viewBox="0 0 23 19"><circle cx="18.6" cy="3.4" r="2.4" fill="none" stroke="#ffffff" stroke-width="1.5"/><path d="M1.2 10.2L8.6 3L14.6 9.6" fill="none" stroke="#ffffff" stroke-width="1.7" stroke-linecap="round" stroke-linejoin="round"/><path d="M1.2 13.2Q4 10.6 6.8 12.8T12.4 12.8T18 12.8T22.2 12.4" fill="none" stroke="#ffffff" stroke-width="1.6" stroke-linecap="round" stroke-linejoin="round"/><path d="M1.2 18.2Q4 15.6 6.8 17.8T12.4 17.8T18 17.8T22.2 17.4" fill="none" stroke="#ffffff" stroke-width="1.6" stroke-linecap="round" stroke-linejoin="round"/></svg>
<div class="t" style="left:300px;top:529.45px;font-size:10px;line-height:14px;color:#ffffff;font-weight:400;transform-origin:left center;transform:scaleX(0.86);">RWF</div>
<div class="b" style="left:9px;top:558px;width:120px;height:39.5px;background:linear-gradient(90deg,#d8563a,#e46d4c);"></div>
<svg class="b" style="left:20.0px;top:566.35px;" width="23" height="23" viewBox="0 0 23 23"><circle cx="11.5" cy="11.5" r="10.6" fill="none" stroke="#ffffff" stroke-width="1.6"/><circle cx="11.5" cy="11.5" r="7.0" fill="none" stroke="#ffffff" stroke-width="1.4"/><path d="M5.2 8.6H17.8M4.6 11.5H18.4M5.2 14.4H17.8M11.5 4.6V18.4" fill="none" stroke="#ffffff" stroke-width="1.3" stroke-linecap="round" stroke-linejoin="round"/></svg>
<div class="t" style="left:54px;top:565.85px;font-size:10px;line-height:14px;color:#ffffff;font-weight:400;transform-origin:left center;transform:scaleX(0.86);">Sewage Sludge /</div>
<div class="t" style="left:54px;top:578.0500000000001px;font-size:10px;line-height:14px;color:#ffffff;font-weight:400;transform-origin:left center;transform:scaleX(0.86);">Biomass</div>
<div class="b" style="left:132px;top:558px;width:120px;height:39.5px;background:linear-gradient(90deg,#f3ac2e,#f8c23a);"></div>
<svg class="b" style="left:143.4px;top:566.85px;" width="23" height="22" viewBox="0 0 23 22"><path d="M1.2 1H21.8V10.4A10.3 10.3 0 0 1 1.2 10.4Z" fill="none" stroke="#ffffff" stroke-width="1.6" stroke-linecap="round" stroke-linejoin="round"/><path d="M1.6 1.4L5.4 7.8A6.8 6.8 0 0 0 17.6 7.8L21.4 1.4" fill="none" stroke="#ffffff" stroke-width="1.5" stroke-linecap="round" stroke-linejoin="round"/></svg>
<div class="t" style="left:177px;top:565.85px;font-size:10px;line-height:14px;color:#ffffff;font-weight:400;transform-origin:left center;transform:scaleX(0.86);">Treated Ballast</div>
<div class="t" style="left:177px;top:578.0500000000001px;font-size:10px;line-height:14px;color:#ffffff;font-weight:400;transform-origin:left center;transform:scaleX(0.86);">Water</div>
<div class="b" style="left:255px;top:558px;width:120px;height:39.5px;background:linear-gradient(90deg,#d8563a,#e46d4c);"></div>
<svg class="b" style="left:266.4px;top:566.85px;" width="23" height="22" viewBox="0 0 23 22"><path d="M1.2 1H21.8V10.4A10.3 10.3 0 0 1 1.2 10.4Z" fill="none" stroke="#ffffff" stroke-width="1.6" stroke-linecap="round" stroke-linejoin="round"/><path d="M1.6 1.4L5.4 7.8A6.8 6.8 0 0 0 17.6 7.8L21.4 1.4" fill="none" stroke="#ffffff" stroke-width="1.5" stroke-linecap="round" stroke-linejoin="round"/></svg>
<div class="t" style="left:300px;top:565.85px;font-size:10px;line-height:14px;color:#ffffff;font-weight:400;transform-origin:left center;transform:scaleX(0.86);">Exchanged Ballast</div>
<div class="t" style="left:300px;top:578.0500000000001px;font-size:10px;line-height:14px;color:#ffffff;font-weight:400;transform-origin:left center;transform:scaleX(0.86);">Water</div>
<div class="b" style="left:4.5px;top:611px;width:381.5px;height:108px;background:transparent;box-sizing:border-box;border:1.5px solid #b4b4b4;border-radius:4px;"></div>
<div class="b" style="left:6px;top:612.5px;width:378.5px;height:14.5px;background:#dc5b3b;"></div>
<div class="b" style="left:371px;top:613.5px;width:12.5px;height:12px;background:#c8502f;box-sizing:border-box;border:1px solid #3a2a20;"></div>
<svg class="b" style="left:372px;top:615px;" width="10" height="9" viewBox="0 0 10 9"><path d="M1.5 6.5L5 3l3.5 3.5" fill="none" stroke="#1a1a1a" stroke-width="1.8"/></svg>
<div class="b" style="left:9px;top:630.5px;width:120px;height:40px;background:linear-gradient(90deg,#4fb257,#62c56a);"></div>
<svg class="b" style="left:20.1px;top:640.2px;" width="23" height="22" viewBox="0 0 23 22"><path d="M1.2 8.2H12.6L11.2 21.2H2.6Z" fill="none" stroke="#ffffff" stroke-width="1.5" stroke-linecap="round" stroke-linejoin="round"/><path d="M2 2.8L6.6 7.4M2.6 7.2L6 3.6" fill="none" stroke="#ffffff" stroke-width="1.3" stroke-linecap="round" stroke-linejoin="round"/><path d="M5.4 8C5 5.5 7 4.2 8.6 5.2C9.6 3.8 12 4.4 12 6.6" fill="none" stroke="#ffffff" stroke-width="1.3" stroke-linecap="round" stroke-linejoin="round"/><path d="M16.8 .8V14.2" fill="none" stroke="#ffffff" stroke-width="1.5" stroke-linecap="round" stroke-linejoin="round"/><path d="M13.4 21.2H21.6L20.4 16.6A3.6 3.6 0 0 0 14.4 16.6Z" fill="none" stroke="#ffffff" stroke-width="1.5" stroke-linecap="round" stroke-linejoin="round"/><path d="M14 18.6H21" fill="none" stroke="#ffffff" stroke-width="1.1" stroke-linecap="round" stroke-linejoin="round"/></svg>
<div class="t" style="left:54px;top:644.7px;font-size:10px;line-height:14px;color:#ffffff;font-weight:400;transform-origin:left center;transform:scaleX(0.86);">Deck Washing</div>
<div class="b" style="left:132px;top:630.5px;width:120px;height:40px;background:linear-gradient(90deg,#f3ac2e,#f8c23a);"></div>
<svg class="b" style="left:143.5px;top:639.6px;" width="23" height="23" viewBox="0 0 23 23"><path d="M11 .6V2.6M8.6 2.6H13.4V6.2M8.6 2.6V6.2M5.4 6.2H16.6V11.4M5.4 6.2V11.4" fill="none" stroke="#ffffff" stroke-width="1.4" stroke-linecap="round" stroke-linejoin="round"/><path d="M1.2 11.6L11 9.4L20.8 11.6L19 17.6H3Z" fill="none" stroke="#ffffff" stroke-width="1.5" stroke-linecap="round" stroke-linejoin="round"/><circle cx="7" cy="14" r="0.8" fill="#ffffff"/><circle cx="15" cy="14" r="0.8" fill="#ffffff"/><path d="M.8 21.4Q3.3 19.6 5.8 21.2T10.8 21.2T15.8 21.2T21.2 21" fill="none" stroke="#ffffff" stroke-width="1.4" stroke-linecap="round" stroke-linejoin="round"/></svg>
<div class="t" style="left:177px;top:644.7px;font-size:10px;line-height:14px;color:#ffffff;font-weight:400;transform-origin:left center;transform:scaleX(0.86);">Biofouling</div>
<div class="b" style="left:255px;top:630.5px;width:120px;height:40px;background:linear-gradient(90deg,#4fb257,#62c56a);"></div>
<svg class="b" style="left:266.6px;top:640.1px;" width="23" height="22" viewBox="0 0 23 22"><path d="M1.2 1.4H18.8L15.8 21H4.2Z" fill="none" stroke="#ffffff" stroke-width="1.5" stroke-linecap="round" stroke-linejoin="round"/><path d="M18.8 1.4H21V6.8" fill="none" stroke="#ffffff" stroke-width="1.5" stroke-linecap="round" stroke-linejoin="round"/><path d="M21 10.4C20.2 11.4 19.8 12.2 19.8 12.8a1.2 1.2 0 0 0 2.4 0C22.2 12.2 21.8 11.4 21 10.4z" fill="none" stroke="#ffffff" stroke-width="1.3" stroke-linecap="round" stroke-linejoin="round"/><path d="M4.2 10.8H15.6" fill="none" stroke="#ffffff" stroke-width="1.2" stroke-dasharray="1.1 1.6" stroke-linejoin="round"/><circle cx="6.4" cy="6" r="1.2" fill="#ffffff"/><circle cx="10.4" cy="6" r="1.2" fill="#ffffff"/><circle cx="8.6" cy="15.8" r="1.2" fill="#ffffff"/></svg>
<div class="t" style="left:300px;top:644.7px;font-size:10px;line-height:14px;color:#ffffff;font-weight:400;transform-origin:left center;transform:scaleX(0.86);">Brine</div>
<div class="b" style="left:9px;top:673.5px;width:120px;height:40px;background:linear-gradient(90deg,#d8563a,#e46d4c);"></div>
<svg class="b" style="left:20.1px;top:685.2px;" width="23" height="18" viewBox="0 0 23 18"><path d="M1.2 .8L3.8 17.4H19.2L21.8 .8" fill="none" stroke="#ffffff" stroke-width="1.6" stroke-linecap="round" stroke-linejoin="round"/><path d="M2.2 5Q5.4 8 8.2 5.6T11.6 5.8T15 5.6T20.8 5" fill="none" stroke="#ffffff" stroke-width="1.6" stroke-linecap="round" stroke-linejoin="round"/></svg>
<div class="t" style="left:54px;top:687.7px;font-size:10px;line-height:14px;color:#ffffff;font-weight:400;transform-origin:left center;transform:scaleX(0.86);">Superchlorination</div>
<div class="b" style="left:132px;top:673.5px;width:120px;height:40px;background:linear-gradient(90deg,#d8563a,#e46d4c);"></div>
<svg class="b" style="left:142.9px;top:683.5px;" width="23" height="23" viewBox="0 0 23 23"><path d="M6.4 .8L8.6 3.2C13.4 2.2 16 6.6 13.4 9.8L10.4 12.8C7 12.4 5.4 8.4 7.6 4.8L6 2.6" fill="none" stroke="#ffffff" stroke-width="1.5" stroke-linecap="round" stroke-linejoin="round"/><path d="M1 16.2Q4.2 13.4 6.9 15.8T12.4 15.8T17.9 15.8T22.4 15.2" fill="none" stroke="#ffffff" stroke-width="1.7" stroke-linecap="round" stroke-linejoin="round"/><path d="M1 21.6Q4.2 18.8 6.9 21.2T12.4 21.2T17.9 21.2T22.4 20.6" fill="none" stroke="#ffffff" stroke-width="1.7" stroke-linecap="round" stroke-linejoin="round"/></svg>
<div class="t" style="left:177px;top:687.7px;font-size:10px;line-height:14px;color:#ffffff;font-weight:400;transform-origin:left center;transform:scaleX(0.86);">Ashes Dispersal</div>
<div class="b" style="left:390px;top:362px;width:13px;height:12px;background:#353535;"></div>
<svg class="b" style="left:392px;top:364px;" width="9" height="8" viewBox="0 0 9 8"><path d="M4.5 1v7M1.5 4l3-3 3 3" fill="none" stroke="#404040" stroke-width="1.2"/></svg>
<div class="b" style="left:390px;top:710px;width:13px;height:12.5px;background:#353535;"></div>
<svg class="b" style="left:392px;top:712px;" width="9" height="8" viewBox="0 0 9 8"><path d="M4.5 0v7M1.5 4l3 3 3-3" fill="none" stroke="#404040" stroke-width="1.2"/></svg>
<div class="b" style="left:405px;top:142px;width:11px;height:602px;background:#4b5866;"></div>
<div class="b" style="left:405px;top:128px;width:11px;height:14px;background:#2e3338;"></div>
<div class="b" style="left:405px;top:142px;width:11px;height:6px;background:#3a4250;"></div>
<div class="b" style="left:405px;top:148px;width:11px;height:12px;background:#3a4048;"></div>
<div class="b" style="left:405px;top:160px;width:11px;height:16px;background:#434b57;"></div>
<div class="b" style="left:405px;top:722.5px;width:11px;height:15px;background:#434c57;"></div>
<div class="b" style="left:405px;top:737.5px;width:11px;height:6.5px;background:#3a4649;"></div>
<svg class="b" style="left:404px;top:118px;" width="14" height="25" viewBox="0 0 14 25"><path d="M11.5 1.5L3.5 12.3l8 10.8" fill="none" stroke="#4a5664" stroke-width="3.6" stroke-linejoin="miter"/></svg>
<div class="b" style="left:418px;top:138px;width:1020px;height:606px;background:transparent;box-sizing:border-box;border:1px solid #5a5a5a;border-bottom:none;"></div>
<div class="b" style="left:479.5px;top:121px;width:184px;height:18px;background:#252525;box-sizing:border-box;border:1px solid #5a5a5a;border-bottom:none;"></div>
<div class="t" style="left:426.8px;top:123.5px;font-size:10px;line-height:14px;color:#e8e8e8;font-weight:400;transform-origin:left center;transform:scaleX(0.8825);">Chart View</div>
<div class="t" style="left:488.7px;top:123.5px;font-size:10px;line-height:14px;color:#f0f0f0;font-weight:400;transform-origin:left center;transform:scaleX(0.8823);">Active Enviro Timeline (USTPA to MXCZM)</div>
<div class="t" style="left:673px;top:123.5px;font-size:10px;line-height:14px;color:#e8e8e8;font-weight:400;transform-origin:left center;transform:scaleX(0.8644);">Active Plan (USTPA to MXCZM)</div>
<div class="t" style="left:814px;top:123.5px;font-size:10px;line-height:14px;color:#e8e8e8;font-weight:400;transform-origin:left center;transform:scaleX(0.8761);">Active Waypoints (USTPA to MXCZM)</div>
<svg class="b" style="left:1428px;top:127px;" width="9" height="6" viewBox="0 0 9 6"><path d="M0 0h8l-4 5z" fill="#9a9a9a"/></svg>
<div class="t" style="left:421px;top:144.5px;font-size:10px;line-height:14px;color:#f0f0f0;font-weight:400;transform-origin:left center;transform:scaleX(0.8973);">Timeline Mode:</div>
<svg class="b" style="left:487px;top:145px;" width="13" height="13" viewBox="0 0 13 13"><circle cx="6.5" cy="6.5" r="5.5" fill="#1c1c1c" stroke="#6a6a6a" stroke-width="1"/><circle cx="6.5" cy="6.5" r="3.2" fill="#f0f0f0"/></svg>
<div class="t" style="left:501.9px;top:144.5px;font-size:10px;line-height:14px;color:#22922a;font-weight:400;transform-origin:left center;transform:scaleX(0.9448);">On track</div>
<div class="b" style="left:545.5px;top:142px;width:135px;height:18.5px;background:transparent;box-sizing:border-box;border:1px solid #5a5a5a;"></div>
<div class="t" style="left:613px;top:144.0px;font-size:10px;line-height:14px;color:#22922a;font-weight:400;transform-origin:center center;transform:translateX(-50%) scaleX(0.9441);">Current Speed Projection</div>
<svg class="b" style="left:687px;top:145px;" width="13" height="13" viewBox="0 0 13 13"><circle cx="6.5" cy="6.5" r="5.5" fill="none" stroke="#6a6a6a" stroke-width="1"/></svg>
<div class="t" style="left:701.6px;top:144.5px;font-size:10px;line-height:14px;color:#f0f0f0;font-weight:700;transform-origin:left center;transform:scaleX(0.8711);">Look ahead</div>
<svg class="b" style="left:753px;top:145px;" width="13" height="13" viewBox="0 0 13 13"><circle cx="6.5" cy="6.5" r="5.5" fill="none" stroke="#6a6a6a" stroke-width="1"/></svg>
<div class="t" style="left:767.5px;top:144.5px;font-size:10px;line-height:14px;color:#f0f0f0;font-weight:700;transform-origin:left center;transform:scaleX(0.9356);">In port</div>
<div class="t" style="right:62.5px;top:143.5px;font-size:12px;line-height:16px;color:#7aa878;font-weight:400;transform-origin:right center;transform:scaleX(0.8709);">2h 49m ahead of plan</div>
<div class="b" style="left:1397px;top:142.5px;width:15px;height:17px;background:#4b5866;"></div>
<svg class="b" style="left:1397px;top:143.5px;" width="15" height="15" viewBox="0 0 15 15"><path d="M3 6.5a4.7 4.7 0 0 1 8.5-2M12 8.5a4.7 4.7 0 0 1-8.5 2" fill="none" stroke="#58a058" stroke-width="1.5"/><path d="M12.5 2v3.5H9M2.5 13V9.5H6" fill="none" stroke="#58a058" stroke-width="1.4"/></svg>
<div class="b" style="left:1419px;top:142.5px;width:15px;height:17px;background:#4b5866;"></div>
<svg class="b" style="left:1419px;top:143.5px;" width="15" height="15" viewBox="0 0 15 15"><circle cx="7.5" cy="7.5" r="4.5" fill="none" stroke="#5a92dc" stroke-width="2.8" stroke-dasharray="2 1.5"/><circle cx="7.5" cy="7.5" r="3.8" fill="none" stroke="#5a92dc" stroke-width="2"/></svg>
<div class="b" style="left:441px;top:163px;width:996.5px;height:85.5px;background:#333333;"></div>
<div class="b" style="left:441px;top:253px;width:996.5px;height:52.5px;background:#333333;"></div>
<div class="t" style="right:851.7px;top:168.5px;font-size:10px;line-height:14px;color:#dddddd;font-weight:400;transform-origin:right center;transform:scaleX(0.82);">LOCAL TIME</div>
<div class="t" style="right:851.7px;top:194.0px;font-size:10px;line-height:14px;color:#dddddd;font-weight:400;transform-origin:right center;transform:scaleX(0.8664);">Events &amp; Ports</div>
<div class="t" style="right:851.7px;top:223.0px;font-size:10px;line-height:14px;color:#dddddd;font-weight:400;transform-origin:right center;transform:scaleX(0.8528);">Zones</div>
<div class="t" style="right:851.7px;top:272.0px;font-size:10px;line-height:14px;color:#dddddd;font-weight:400;transform-origin:right center;transform:scaleX(0.8422);">Areas</div>
<div class="b" style="left:592px;top:190.5px;width:30px;height:19.5px;background:#474747;"></div>
<div class="b" style="left:622px;top:190.5px;width:31px;height:19.5px;background:#3f3f3f;"></div>
<div class="b" style="left:653px;top:190.5px;width:30px;height:19.5px;background:#474747;"></div>
<div class="b" style="left:683px;top:190.5px;width:31px;height:19.5px;background:#3f3f3f;"></div>
<div class="b" style="left:714px;top:190.5px;width:30px;height:19.5px;background:#474747;"></div>
<div class="b" style="left:744px;top:190.5px;width:31px;height:19.5px;background:#3f3f3f;"></div>
<div class="b" style="left:775px;top:190.5px;width:30px;height:19.5px;background:#474747;"></div>
<div class="b" style="left:805px;top:190.5px;width:30px;height:19.5px;background:#3f3f3f;"></div>
<div class="b" style="left:835px;top:190.5px;width:31px;height:19.5px;background:#474747;"></div>
<div class="b" style="left:866px;top:190.5px;width:30px;height:19.5px;background:#3f3f3f;"></div>
<div class="b" style="left:896px;top:190.5px;width:31px;height:19.5px;background:#474747;"></div>
<div class="b" style="left:927px;top:190.5px;width:30px;height:19.5px;background:#3f3f3f;"></div>
<div class="b" style="left:957px;top:190.5px;width:31px;height:19.5px;background:#474747;"></div>
<div class="b" style="left:988px;top:190.5px;width:30px;height:19.5px;background:#3f3f3f;"></div>
<div class="b" style="left:1018px;top:190.5px;width:31px;height:19.5px;background:#474747;"></div>
<div class="b" style="left:1049px;top:190.5px;width:30px;height:19.5px;background:#3f3f3f;"></div>
<div class="b" style="left:1079px;top:190.5px;width:31px;height:19.5px;background:#474747;"></div>
<div class="b" style="left:1110px;top:190.5px;width:30px;height:19.5px;background:#3f3f3f;"></div>
<div class="b" style="left:1140px;top:190.5px;width:31px;height:19.5px;background:#474747;"></div>
<div class="b" style="left:1171px;top:190.5px;width:30px;height:19.5px;background:#3f3f3f;"></div>
<div class="b" style="left:1201px;top:190.5px;width:30px;height:19.5px;background:#474747;"></div>
<div class="b" style="left:1231px;top:190.5px;width:31px;height:19.5px;background:#3f3f3f;"></div>
<div class="b" style="left:1262px;top:190.5px;width:30px;height:19.5px;background:#474747;"></div>
<div class="b" style="left:1292px;top:190.5px;width:31px;height:19.5px;background:#3f3f3f;"></div>
<div class="b" style="left:1323px;top:190.5px;width:30px;height:19.5px;background:#474747;"></div>
<div class="b" style="left:1353px;top:190.5px;width:31px;height:19.5px;background:#3f3f3f;"></div>
<div class="b" style="left:1384px;top:190.5px;width:30px;height:19.5px;background:#474747;"></div>
<div class="b" style="left:1414px;top:190.5px;width:24px;height:19.5px;background:#3f3f3f;"></div>
<div class="b" style="left:593.3px;top:163px;width:844.2px;height:25px;overflow:hidden">
<div class="b" style="left:-2.00px;top:1px;width:1px;height:24px;background:#5a5a5a"></div>
<div class="t" style="left:-1.50px;top:1px;font-size:9px;line-height:13px;color:#e4e4e4;transform-origin:center center;transform:translateX(-50%) scaleX(0.86)">15:00</div>
<div class="b" style="left:28.46px;top:1px;width:1px;height:24px;background:#5a5a5a"></div>
<div class="t" style="left:28.96px;top:1px;font-size:9px;line-height:13px;color:#e4e4e4;transform-origin:center center;transform:translateX(-50%) scaleX(0.86)">15:30</div>
<div class="b" style="left:58.92px;top:1px;width:1px;height:24px;background:#5a5a5a"></div>
<div class="t" style="left:59.42px;top:1px;font-size:9px;line-height:13px;color:#e4e4e4;transform-origin:center center;transform:translateX(-50%) scaleX(0.86)">16:00</div>
<div class="b" style="left:89.38px;top:1px;width:1px;height:24px;background:#5a5a5a"></div>
<div class="t" style="left:89.88px;top:1px;font-size:9px;line-height:13px;color:#e4e4e4;transform-origin:center center;transform:translateX(-50%) scaleX(0.86)">16:30</div>
<div class="b" style="left:119.84px;top:1px;width:1px;height:24px;background:#5a5a5a"></div>
<div class="t" style="left:120.34px;top:1px;font-size:9px;line-height:13px;color:#e4e4e4;transform-origin:center center;transform:translateX(-50%) scaleX(0.86)">17:00</div>
<div class="b" style="left:150.30px;top:1px;width:1px;height:24px;background:#5a5a5a"></div>
<div class="t" style="left:150.80px;top:1px;font-size:9px;line-height:13px;color:#e4e4e4;transform-origin:center center;transform:translateX(-50%) scaleX(0.86)">17:30</div>
<div class="b" style="left:180.76px;top:1px;width:1px;height:24px;background:#5a5a5a"></div>
<div class="t" style="left:181.26px;top:1px;font-size:9px;line-height:13px;color:#e4e4e4;transform-origin:center center;transform:translateX(-50%) scaleX(0.86)">18:00</div>
<div class="b" style="left:211.22px;top:1px;width:1px;height:24px;background:#5a5a5a"></div>
<div class="t" style="left:211.72px;top:1px;font-size:9px;line-height:13px;color:#e4e4e4;transform-origin:center center;transform:translateX(-50%) scaleX(0.86)">18:30</div>
<div class="b" style="left:241.68px;top:1px;width:1px;height:24px;background:#5a5a5a"></div>
<div class="t" style="left:242.18px;top:1px;font-size:9px;line-height:13px;color:#e4e4e4;transform-origin:center center;transform:translateX(-50%) scaleX(0.86)">19:00</div>
<div class="b" style="left:272.14px;top:1px;width:1px;height:24px;background:#5a5a5a"></div>
<div class="t" style="left:272.64px;top:1px;font-size:9px;line-height:13px;color:#e4e4e4;transform-origin:center center;transform:translateX(-50%) scaleX(0.86)">19:30</div>
<div class="b" style="left:302.60px;top:1px;width:1px;height:24px;background:#5a5a5a"></div>
<div class="t" style="left:303.10px;top:1px;font-size:9px;line-height:13px;color:#e4e4e4;transform-origin:center center;transform:translateX(-50%) scaleX(0.86)">20:00</div>
<div class="b" style="left:333.06px;top:1px;width:1px;height:24px;background:#5a5a5a"></div>
<div class="t" style="left:333.56px;top:1px;font-size:9px;line-height:13px;color:#e4e4e4;transform-origin:center center;transform:translateX(-50%) scaleX(0.86)">20:30</div>
<div class="b" style="left:363.52px;top:1px;width:1px;height:24px;background:#5a5a5a"></div>
<div class="t" style="left:364.02px;top:1px;font-size:9px;line-height:13px;color:#e4e4e4;transform-origin:center center;transform:translateX(-50%) scaleX(0.86)">21:00</div>
<div class="b" style="left:393.98px;top:1px;width:1px;height:24px;background:#5a5a5a"></div>
<div class="t" style="left:394.48px;top:1px;font-size:9px;line-height:13px;color:#e4e4e4;transform-origin:center center;transform:translateX(-50%) scaleX(0.86)">21:30</div>
<div class="b" style="left:424.44px;top:1px;width:1px;height:24px;background:#5a5a5a"></div>
<div class="t" style="left:424.94px;top:1px;font-size:9px;line-height:13px;color:#e4e4e4;transform-origin:center center;transform:translateX(-50%) scaleX(0.86)">22:00</div>
<div class="b" style="left:454.90px;top:1px;width:1px;height:24px;background:#5a5a5a"></div>
<div class="t" style="left:455.40px;top:1px;font-size:9px;line-height:13px;color:#e4e4e4;transform-origin:center center;transform:translateX(-50%) scaleX(0.86)">22:30</div>
<div class="b" style="left:485.36px;top:1px;width:1px;height:24px;background:#5a5a5a"></div>
<div class="t" style="left:485.86px;top:1px;font-size:9px;line-height:13px;color:#e4e4e4;transform-origin:center center;transform:translateX(-50%) scaleX(0.86)">23:00</div>
<div class="b" style="left:515.82px;top:1px;width:1px;height:24px;background:#5a5a5a"></div>
<div class="t" style="left:516.32px;top:1px;font-size:9px;line-height:13px;color:#e4e4e4;transform-origin:center center;transform:translateX(-50%) scaleX(0.86)">23:30</div>
<div class="b" style="left:546.28px;top:1px;width:1px;height:24px;background:#5a5a5a"></div>
<div class="t" style="left:546.78px;top:1px;font-size:9px;line-height:13px;color:#e4e4e4;transform-origin:center center;transform:translateX(-50%) scaleX(0.86)">00:00</div>
<div class="b" style="left:576.74px;top:1px;width:1px;height:24px;background:#5a5a5a"></div>
<div class="t" style="left:577.24px;top:1px;font-size:9px;line-height:13px;color:#e4e4e4;transform-origin:center center;transform:translateX(-50%) scaleX(0.86)">00:30</div>
<div class="b" style="left:607.20px;top:1px;width:1px;height:24px;background:#5a5a5a"></div>
<div class="t" style="left:607.70px;top:1px;font-size:9px;line-height:13px;color:#e4e4e4;transform-origin:center center;transform:translateX(-50%) scaleX(0.86)">01:00</div>
<div class="b" style="left:637.66px;top:1px;width:1px;height:24px;background:#5a5a5a"></div>
<div class="t" style="left:638.16px;top:1px;font-size:9px;line-height:13px;color:#e4e4e4;transform-origin:center center;transform:translateX(-50%) scaleX(0.86)">01:30</div>
<div class="b" style="left:668.12px;top:1px;width:1px;height:24px;background:#5a5a5a"></div>
<div class="t" style="left:668.62px;top:1px;font-size:9px;line-height:13px;color:#e4e4e4;transform-origin:center center;transform:translateX(-50%) scaleX(0.86)">02:00</div>
<div class="b" style="left:698.58px;top:1px;width:1px;height:24px;background:#5a5a5a"></div>
<div class="t" style="left:699.08px;top:1px;font-size:9px;line-height:13px;color:#e4e4e4;transform-origin:center center;transform:translateX(-50%) scaleX(0.86)">02:30</div>
<div class="b" style="left:729.04px;top:1px;width:1px;height:24px;background:#5a5a5a"></div>
<div class="t" style="left:729.54px;top:1px;font-size:9px;line-height:13px;color:#e4e4e4;transform-origin:center center;transform:translateX(-50%) scaleX(0.86)">03:00</div>
<div class="b" style="left:759.50px;top:1px;width:1px;height:24px;background:#5a5a5a"></div>
<div class="t" style="left:760.00px;top:1px;font-size:9px;line-height:13px;color:#e4e4e4;transform-origin:center center;transform:translateX(-50%) scaleX(0.86)">03:30</div>
<div class="b" style="left:789.96px;top:1px;width:1px;height:24px;background:#5a5a5a"></div>
<div class="t" style="left:790.46px;top:1px;font-size:9px;line-height:13px;color:#e4e4e4;transform-origin:center center;transform:translateX(-50%) scaleX(0.86)">04:00</div>
<div class="b" style="left:820.42px;top:1px;width:1px;height:24px;background:#5a5a5a"></div>
<div class="t" style="left:820.92px;top:1px;font-size:9px;line-height:13px;color:#e4e4e4;transform-origin:center center;transform:translateX(-50%) scaleX(0.86)">04:30</div>
<div class="b" style="left:850.88px;top:1px;width:1px;height:24px;background:#5a5a5a"></div>
<div class="t" style="left:851.38px;top:1px;font-size:9px;line-height:13px;color:#e4e4e4;transform-origin:center center;transform:translateX(-50%) scaleX(0.86)">05:00</div>
</div>
<div class="b" style="left:593px;top:213.5px;width:85px;height:14px;background:#232323;"></div>
<div class="b" style="left:594px;top:225.0px;width:83px;height:2px;background:#e8c400;"></div>
<div class="t" style="left:599.4px;top:214.5px;font-size:9px;line-height:12px;color:#f4f4f4;font-weight:700;transform-origin:left center;transform:scaleX(0.8499);">Inside 0 NM</div>
<div class="b" style="left:679.5px;top:213.5px;width:20.5px;height:14px;background:#232323;"></div>
<div class="b" style="left:680.5px;top:225.0px;width:18.5px;height:2px;background:#8a7cc8;"></div>
<div class="t" style="left:681px;top:214.0px;font-size:8px;line-height:11px;color:#dddddd;font-weight:400;transform-origin:left center;transform:scaleX(0.82);">16:26</div>
<div class="t" style="left:702.5px;top:214.0px;font-size:9px;line-height:12px;color:#f4f4f4;font-weight:700;transform-origin:left center;transform:scaleX(0.88);">0 - 4 NM</div>
<div class="b" style="left:739px;top:213.5px;width:66px;height:14px;background:#232323;"></div>
<div class="b" style="left:740px;top:225.0px;width:64px;height:2px;background:#a49ad8;"></div>
<div class="t" style="left:740.5px;top:214.0px;font-size:8px;line-height:11px;color:#dddddd;font-weight:400;transform-origin:left center;transform:scaleX(0.82);">17:24</div>
<div class="t" style="left:760px;top:214.0px;font-size:9px;line-height:12px;color:#f4f4f4;font-weight:700;transform-origin:left center;transform:scaleX(0.88);">12 - 25 NM</div>
<div class="b" style="left:701px;top:230.5px;width:36.5px;height:14px;background:#232323;"></div>
<div class="b" style="left:702px;top:242.0px;width:34.5px;height:2px;background:#5a68c0;"></div>
<div class="t" style="left:702.5px;top:230.5px;font-size:8px;line-height:11px;color:#dddddd;font-weight:400;transform-origin:left center;transform:scaleX(0.82);">16:47</div>
<div class="t" style="left:724px;top:231.0px;font-size:9px;line-height:12px;color:#f4f4f4;font-weight:700;transform-origin:left center;transform:scaleX(0.88);">4 - 12 NM</div>
<div class="b" style="left:805.5px;top:230.5px;width:176.0px;height:14px;background:#232323;"></div>
<div class="b" style="left:806.5px;top:242.0px;width:174.0px;height:2px;background:#9a88c8;"></div>
<div class="t" style="left:806.5px;top:230.5px;font-size:8px;line-height:11px;color:#dddddd;font-weight:400;transform-origin:left center;transform:scaleX(0.82);">18:30</div>
<div class="t" style="left:828.5px;top:231.0px;font-size:9px;line-height:12px;color:#f4f4f4;font-weight:700;transform-origin:left center;transform:scaleX(0.88);">25 - 50 NM</div>
<div class="b" style="left:983.5px;top:230.5px;width:454.0px;height:14px;background:#232323;"></div>
<div class="b" style="left:984.5px;top:242.0px;width:452.0px;height:2px;background:#aaa6d8;"></div>
<div class="t" style="left:984.5px;top:230.5px;font-size:8px;line-height:11px;color:#dddddd;font-weight:400;transform-origin:left center;transform:scaleX(0.82);">21:25</div>
<div class="t" style="left:1006.5px;top:231.0px;font-size:9px;line-height:12px;color:#f4f4f4;font-weight:700;transform-origin:left center;transform:scaleX(0.88);">50 - 200 NM</div>
<div class="b" style="left:593px;top:254.3px;width:844.5px;height:14.2px;background:#232323;"></div>
<div class="b" style="left:594px;top:266.0px;width:842.5px;height:2px;background:#cf7c12;"></div>
<div class="t" style="left:599.5px;top:254.5px;font-size:9px;line-height:12px;color:#f4f4f4;font-weight:700;transform-origin:left center;transform:scaleX(0.85);">ECA</div>
<div class="b" style="left:593px;top:287.5px;width:171px;height:14px;background:#232323;"></div>
<div class="b" style="left:594px;top:299.0px;width:169px;height:2px;background:#1b8196;"></div>
<div class="t" style="left:599.5px;top:287.5px;font-size:9px;line-height:12px;color:#f4f4f4;font-weight:700;transform-origin:left center;transform:scaleX(0.85);">Port</div>
<div class="t" style="right:677px;top:287.5px;font-size:8.5px;line-height:11px;color:#f4f4f4;font-weight:700;transform-origin:right center;transform:scaleX(0.85);">17:50</div>
<div class="b" style="left:441px;top:326px;width:150.79999999999995px;height:18px;background:#2f2f2f;"></div>
<div class="t" style="right:851.7px;top:329.0px;font-size:10px;line-height:14px;color:#dcdcdc;font-weight:400;transform-origin:right center;transform:scaleX(0.8975);">SOx limit</div>
<div class="b" style="left:591.8px;top:326px;width:845.7px;height:18px;background:#c0c0c0;"></div>
<div class="b" style="left:441px;top:344px;width:150.79999999999995px;height:18px;background:#393939;"></div>
<div class="t" style="right:851.7px;top:347.0px;font-size:10px;line-height:14px;color:#dcdcdc;font-weight:400;transform-origin:right center;transform:scaleX(0.8585);">Open-loop EGCS</div>
<div class="b" style="left:591.8px;top:344px;width:103.9px;height:18px;background:#dc5b3b;"></div>
<div class="b" style="left:695.7px;top:344px;width:741.8px;height:18px;background:#f5b130;"></div>
<div class="b" style="left:441px;top:362px;width:150.79999999999995px;height:18px;background:#2f2f2f;"></div>
<div class="t" style="right:851.7px;top:365.0px;font-size:10px;line-height:14px;color:#dcdcdc;font-weight:400;transform-origin:right center;transform:scaleX(0.8284);">EGCS Washwater</div>
<div class="b" style="left:591.8px;top:362px;width:103.9px;height:18px;background:#dc5b3b;"></div>
<div class="b" style="left:695.7px;top:362px;width:5.4px;height:18px;background:#f5b130;"></div>
<div class="b" style="left:701.1px;top:362px;width:736.4px;height:18px;background:#50b85a;"></div>
<div class="b" style="left:441px;top:380px;width:150.79999999999995px;height:18px;background:#393939;"></div>
<div class="t" style="right:851.7px;top:383.0px;font-size:10px;line-height:14px;color:#dcdcdc;font-weight:400;transform-origin:right center;transform:scaleX(0.9081);">Incinerator</div>
<div class="b" style="left:591.8px;top:380px;width:109.3px;height:18px;background:#dc5b3b;"></div>
<div class="b" style="left:701.1px;top:380px;width:736.4px;height:18px;background:#50b85a;"></div>
<div class="b" style="left:441px;top:398px;width:150.79999999999995px;height:18px;background:#2f2f2f;"></div>
<div class="t" style="right:851.7px;top:401.0px;font-size:10px;line-height:14px;color:#dcdcdc;font-weight:400;transform-origin:right center;transform:scaleX(0.8801);">Visible Smoke</div>
<div class="b" style="left:591.8px;top:398px;width:172.6px;height:18px;background:#f5b130;"></div>
<div class="b" style="left:764.4px;top:398px;width:673.1px;height:18px;background:#50b85a;"></div>
<div class="b" style="left:441px;top:416px;width:150.79999999999995px;height:18px;background:#393939;"></div>
<div class="t" style="right:851.7px;top:419.0px;font-size:10px;line-height:14px;color:#dcdcdc;font-weight:400;transform-origin:right center;transform:scaleX(0.875);">NOx</div>
<div class="b" style="left:591.8px;top:416px;width:845.7px;height:18px;background:#f5b130;"></div>
<div class="b" style="left:441px;top:440.25px;width:150.79999999999995px;height:18px;background:#2f2f2f;"></div>
<div class="t" style="right:851.7px;top:443.25px;font-size:10px;line-height:14px;color:#dcdcdc;font-weight:400;transform-origin:right center;transform:scaleX(0.8855);">Bilge water</div>
<div class="b" style="left:591.8px;top:440.25px;width:172.6px;height:18px;background:#dc5b3b;"></div>
<div class="b" style="left:764.4px;top:440.25px;width:673.1px;height:18px;background:#50b85a;"></div>
<div class="b" style="left:441px;top:458.25px;width:150.79999999999995px;height:18px;background:#393939;"></div>
<div class="t" style="right:851.7px;top:461.25px;font-size:10px;line-height:14px;color:#dcdcdc;font-weight:400;transform-origin:right center;transform:scaleX(0.8575);">Sewage (MSD Type 2)</div>
<div class="b" style="left:591.8px;top:458.25px;width:172.6px;height:18px;background:#dc5b3b;"></div>
<div class="b" style="left:764.4px;top:458.25px;width:673.1px;height:18px;background:#50b85a;"></div>
<div class="b" style="left:441px;top:476.25px;width:150.79999999999995px;height:18px;background:#2f2f2f;"></div>
<div class="t" style="right:851.7px;top:479.25px;font-size:10px;line-height:14px;color:#dcdcdc;font-weight:400;transform-origin:right center;transform:scaleX(0.8416);">Sewage (AWWTS)</div>
<div class="b" style="left:591.8px;top:476.25px;width:172.6px;height:18px;background:#dc5b3b;"></div>
<div class="b" style="left:764.4px;top:476.25px;width:673.1px;height:18px;background:#50b85a;"></div>
<div class="b" style="left:441px;top:494.25px;width:150.79999999999995px;height:18px;background:#393939;"></div>
<div class="t" style="right:851.7px;top:497.25px;font-size:10px;line-height:14px;color:#dcdcdc;font-weight:400;transform-origin:right center;transform:scaleX(0.873);">Grey Water</div>
<div class="b" style="left:591.8px;top:494.25px;width:146.6px;height:18px;background:#dc5b3b;"></div>
<div class="b" style="left:738.4px;top:494.25px;width:699.1px;height:18px;background:#50b85a;"></div>
<div class="b" style="left:441px;top:512.25px;width:150.79999999999995px;height:18px;background:#2f2f2f;"></div>
<div class="t" style="right:851.7px;top:515.25px;font-size:10px;line-height:14px;color:#dcdcdc;font-weight:400;transform-origin:right center;transform:scaleX(0.9131);">Food - Comminuted (&lt;25mm)</div>
<div class="b" style="left:591.8px;top:512.25px;width:146.6px;height:18px;background:#dc5b3b;"></div>
<div class="b" style="left:738.4px;top:512.25px;width:699.1px;height:18px;background:#50b85a;"></div>
<div class="b" style="left:441px;top:530.25px;width:150.79999999999995px;height:18px;background:#393939;"></div>
<div class="t" style="right:851.7px;top:533.25px;font-size:10px;line-height:14px;color:#dcdcdc;font-weight:400;transform-origin:right center;transform:scaleX(0.8013);">RWF</div>
<div class="b" style="left:591.8px;top:530.25px;width:146.6px;height:18px;background:#dc5b3b;"></div>
<div class="b" style="left:738.4px;top:530.25px;width:699.1px;height:18px;background:#50b85a;"></div>
<div class="b" style="left:441px;top:548.25px;width:150.79999999999995px;height:18px;background:#2f2f2f;"></div>
<div class="t" style="right:851.7px;top:551.25px;font-size:10px;line-height:14px;color:#dcdcdc;font-weight:400;transform-origin:right center;transform:scaleX(0.8695);">Sewage Sludge / Biomass</div>
<div class="b" style="left:591.8px;top:548.25px;width:146.6px;height:18px;background:#dc5b3b;"></div>
<div class="b" style="left:738.4px;top:548.25px;width:699.1px;height:18px;background:#f5b130;"></div>
<div class="b" style="left:441px;top:566.25px;width:150.79999999999995px;height:18px;background:#393939;"></div>
<div class="t" style="right:851.7px;top:569.25px;font-size:10px;line-height:14px;color:#dcdcdc;font-weight:400;transform-origin:right center;transform:scaleX(0.8691);">Treated Ballast Water</div>
<div class="b" style="left:591.8px;top:566.25px;width:146.6px;height:18px;background:#f5b130;"></div>
<div class="b" style="left:738.4px;top:566.25px;width:699.1px;height:18px;background:#50b85a;"></div>
<div class="b" style="left:441px;top:584.25px;width:150.79999999999995px;height:18px;background:#2f2f2f;"></div>
<div class="t" style="right:851.7px;top:587.25px;font-size:10px;line-height:14px;color:#dcdcdc;font-weight:400;transform-origin:right center;transform:scaleX(0.8659);">Exchanged Ballast Water</div>
<div class="b" style="left:591.8px;top:584.25px;width:845.7px;height:18px;background:#dc5b3b;"></div>
<div class="b" style="left:441px;top:608.5px;width:150.79999999999995px;height:18px;background:#2f2f2f;"></div>
<div class="t" style="right:851.7px;top:611.5px;font-size:10px;line-height:14px;color:#dcdcdc;font-weight:400;transform-origin:right center;transform:scaleX(0.8753);">Deck Washing</div>
<div class="b" style="left:591.8px;top:608.5px;width:109.3px;height:18px;background:#f5b130;"></div>
<div class="b" style="left:701.1px;top:608.5px;width:736.4px;height:18px;background:#50b85a;"></div>
<div class="b" style="left:441px;top:626.5px;width:150.79999999999995px;height:18px;background:#393939;"></div>
<div class="t" style="right:851.7px;top:629.5px;font-size:10px;line-height:14px;color:#dcdcdc;font-weight:400;transform-origin:right center;transform:scaleX(0.9313);">Biofouling</div>
<div class="b" style="left:591.8px;top:626.5px;width:146.6px;height:18px;background:#f5b130;"></div>
<div class="b" style="left:738.4px;top:626.5px;width:699.1px;height:18px;background:#3b3c3e;"></div>
<div class="b" style="left:441px;top:644.5px;width:150.79999999999995px;height:18px;background:#2f2f2f;"></div>
<div class="t" style="right:851.7px;top:647.5px;font-size:10px;line-height:14px;color:#dcdcdc;font-weight:400;transform-origin:right center;transform:scaleX(0.8653);">Brine</div>
<div class="b" style="left:591.8px;top:644.5px;width:109.3px;height:18px;background:#f5b130;"></div>
<div class="b" style="left:701.1px;top:644.5px;width:736.4px;height:18px;background:#50b85a;"></div>
<div class="b" style="left:441px;top:662.5px;width:150.79999999999995px;height:18px;background:#393939;"></div>
<div class="t" style="right:851.7px;top:665.5px;font-size:10px;line-height:14px;color:#dcdcdc;font-weight:400;transform-origin:right center;transform:scaleX(0.9059);">Superchlorination</div>
<div class="b" style="left:591.8px;top:662.5px;width:146.6px;height:18px;background:#dc5b3b;"></div>
<div class="b" style="left:738.4px;top:662.5px;width:699.1px;height:18px;background:#50b85a;"></div>
<div class="b" style="left:441px;top:680.5px;width:150.79999999999995px;height:18px;background:#2f2f2f;"></div>
<div class="t" style="right:851.7px;top:683.5px;font-size:10px;line-height:14px;color:#dcdcdc;font-weight:400;transform-origin:right center;transform:scaleX(0.8568);">Ashes Dispersal</div>
<div class="b" style="left:591.8px;top:680.5px;width:146.6px;height:18px;background:#dc5b3b;"></div>
<div class="b" style="left:738.4px;top:680.5px;width:699.1px;height:18px;background:#f5b130;"></div>
<div class="b" style="left:441px;top:698.5px;width:150.79999999999995px;height:18px;background:#393939;"></div>
<div class="t" style="right:851.7px;top:701.5px;font-size:10px;line-height:14px;color:#dcdcdc;font-weight:400;transform-origin:right center;transform:scaleX(0.8471);">VGP Waters</div>
<div class="b" style="left:591.8px;top:698.5px;width:109.3px;height:18px;background:#f5b130;"></div>
<div class="b" style="left:701.1px;top:698.5px;width:736.4px;height:18px;background:#3b3c3e;"></div>
<div class="b" style="left:606.43px;top:326px;width:1.2px;height:108px;background:rgba(255,255,255,.15)"></div>
<div class="b" style="left:621.66px;top:326px;width:1.2px;height:108px;background:rgba(255,255,255,.15)"></div>
<div class="b" style="left:636.89px;top:326px;width:1.2px;height:108px;background:rgba(255,255,255,.15)"></div>
<div class="b" style="left:652.12px;top:326px;width:1.2px;height:108px;background:rgba(255,255,255,.15)"></div>
<div class="b" style="left:667.35px;top:326px;width:1.2px;height:108px;background:rgba(255,255,255,.15)"></div>
<div class="b" style="left:682.58px;top:326px;width:1.2px;height:108px;background:rgba(255,255,255,.15)"></div>
<div class="b" style="left:697.81px;top:326px;width:1.2px;height:108px;background:rgba(255,255,255,.15)"></div>
<div class="b" style="left:713.04px;top:326px;width:1.2px;height:108px;background:rgba(255,255,255,.15)"></div>
<div class="b" style="left:728.27px;top:326px;width:1.2px;height:108px;background:rgba(255,255,255,.15)"></div>
<div class="b" style="left:743.50px;top:326px;width:1.2px;height:108px;background:rgba(255,255,255,.15)"></div>
<div class="b" style="left:758.73px;top:326px;width:1.2px;height:108px;background:rgba(255,255,255,.15)"></div>
<div class="b" style="left:773.96px;top:326px;width:1.2px;height:108px;background:rgba(255,255,255,.15)"></div>
<div class="b" style="left:789.19px;top:326px;width:1.2px;height:108px;background:rgba(255,255,255,.15)"></div>
<div class="b" style="left:804.42px;top:326px;width:1.2px;height:108px;background:rgba(255,255,255,.15)"></div>
<div class="b" style="left:819.65px;top:326px;width:1.2px;height:108px;background:rgba(255,255,255,.15)"></div>
<div class="b" style="left:834.88px;top:326px;width:1.2px;height:108px;background:rgba(255,255,255,.15)"></div>
<div class="b" style="left:850.11px;top:326px;width:1.2px;height:108px;background:rgba(255,255,255,.15)"></div>
<div class="b" style="left:865.34px;top:326px;width:1.2px;height:108px;background:rgba(255,255,255,.15)"></div>
<div class="b" style="left:880.57px;top:326px;width:1.2px;height:108px;background:rgba(255,255,255,.15)"></div>
<div class="b" style="left:895.80px;top:326px;width:1.2px;height:108px;background:rgba(255,255,255,.15)"></div>
<div class="b" style="left:911.03px;top:326px;width:1.2px;height:108px;background:rgba(255,255,255,.15)"></div>
<div class="b" style="left:926.26px;top:326px;width:1.2px;height:108px;background:rgba(255,255,255,.15)"></div>
<div class="b" style="left:941.49px;top:326px;width:1.2px;height:108px;background:rgba(255,255,255,.15)"></div>
<div class="b" style="left:956.72px;top:326px;width:1.2px;height:108px;background:rgba(255,255,255,.15)"></div>
<div class="b" style="left:971.95px;top:326px;width:1.2px;height:108px;background:rgba(255,255,255,.15)"></div>
<div class="b" style="left:987.18px;top:326px;width:1.2px;height:108px;background:rgba(255,255,255,.15)"></div>
<div class="b" style="left:1002.41px;top:326px;width:1.2px;height:108px;background:rgba(255,255,255,.15)"></div>
<div class="b" style="left:1017.64px;top:326px;width:1.2px;height:108px;background:rgba(255,255,255,.15)"></div>
<div class="b" style="left:1032.87px;top:326px;width:1.2px;height:108px;background:rgba(255,255,255,.15)"></div>
<div class="b" style="left:1048.10px;top:326px;width:1.2px;height:108px;background:rgba(255,255,255,.15)"></div>
<div class="b" style="left:1063.33px;top:326px;width:1.2px;height:108px;background:rgba(255,255,255,.15)"></div>
<div class="b" style="left:1078.56px;top:326px;width:1.2px;height:108px;background:rgba(255,255,255,.15)"></div>
<div class="b" style="left:1093.79px;top:326px;width:1.2px;height:108px;background:rgba(255,255,255,.15)"></div>
<div class="b" style="left:1109.02px;top:326px;width:1.2px;height:108px;background:rgba(255,255,255,.15)"></div>
<div class="b" style="left:1124.25px;top:326px;width:1.2px;height:108px;background:rgba(255,255,255,.15)"></div>
<div class="b" style="left:1139.48px;top:326px;width:1.2px;height:108px;background:rgba(255,255,255,.15)"></div>
<div class="b" style="left:1154.71px;top:326px;width:1.2px;height:108px;background:rgba(255,255,255,.15)"></div>
<div class="b" style="left:1169.94px;top:326px;width:1.2px;height:108px;background:rgba(255,255,255,.15)"></div>
<div class="b" style="left:1185.17px;top:326px;width:1.2px;height:108px;background:rgba(255,255,255,.15)"></div>
<div class="b" style="left:1200.40px;top:326px;width:1.2px;height:108px;background:rgba(255,255,255,.15)"></div>
<div class="b" style="left:1215.63px;top:326px;width:1.2px;height:108px;background:rgba(255,255,255,.15)"></div>
<div class="b" style="left:1230.86px;top:326px;width:1.2px;height:108px;background:rgba(255,255,255,.15)"></div>
<div class="b" style="left:1246.09px;top:326px;width:1.2px;height:108px;background:rgba(255,255,255,.15)"></div>
<div class="b" style="left:1261.32px;top:326px;width:1.2px;height:108px;background:rgba(255,255,255,.15)"></div>
<div class="b" style="left:1276.55px;top:326px;width:1.2px;height:108px;background:rgba(255,255,255,.15)"></div>
<div class="b" style="left:1291.78px;top:326px;width:1.2px;height:108px;background:rgba(255,255,255,.15)"></div>
<div class="b" style="left:1307.01px;top:326px;width:1.2px;height:108px;background:rgba(255,255,255,.15)"></div>
<div class="b" style="left:1322.24px;top:326px;width:1.2px;height:108px;background:rgba(255,255,255,.15)"></div>
<div class="b" style="left:1337.47px;top:326px;width:1.2px;height:108px;background:rgba(255,255,255,.15)"></div>
<div class="b" style="left:1352.70px;top:326px;width:1.2px;height:108px;background:rgba(255,255,255,.15)"></div>
<div class="b" style="left:1367.93px;top:326px;width:1.2px;height:108px;background:rgba(255,255,255,.15)"></div>
<div class="b" style="left:1383.16px;top:326px;width:1.2px;height:108px;background:rgba(255,255,255,.15)"></div>
<div class="b" style="left:1398.39px;top:326px;width:1.2px;height:108px;background:rgba(255,255,255,.15)"></div>
<div class="b" style="left:1413.62px;top:326px;width:1.2px;height:108px;background:rgba(255,255,255,.15)"></div>
<div class="b" style="left:1428.85px;top:326px;width:1.2px;height:108px;background:rgba(255,255,255,.15)"></div>
<div class="b" style="left:606.43px;top:440.25px;width:1.2px;height:162px;background:rgba(255,255,255,.15)"></div>
<div class="b" style="left:621.66px;top:440.25px;width:1.2px;height:162px;background:rgba(255,255,255,.15)"></div>
<div class="b" style="left:636.89px;top:440.25px;width:1.2px;height:162px;background:rgba(255,255,255,.15)"></div>
<div class="b" style="left:652.12px;top:440.25px;width:1.2px;height:162px;background:rgba(255,255,255,.15)"></div>
<div class="b" style="left:667.35px;top:440.25px;width:1.2px;height:162px;background:rgba(255,255,255,.15)"></div>
<div class="b" style="left:682.58px;top:440.25px;width:1.2px;height:162px;background:rgba(255,255,255,.15)"></div>
<div class="b" style="left:697.81px;top:440.25px;width:1.2px;height:162px;background:rgba(255,255,255,.15)"></div>
<div class="b" style="left:713.04px;top:440.25px;width:1.2px;height:162px;background:rgba(255,255,255,.15)"></div>
<div class="b" style="left:728.27px;top:440.25px;width:1.2px;height:162px;background:rgba(255,255,255,.15)"></div>
<div class="b" style="left:743.50px;top:440.25px;width:1.2px;height:162px;background:rgba(255,255,255,.15)"></div>
<div class="b" style="left:758.73px;top:440.25px;width:1.2px;height:162px;background:rgba(255,255,255,.15)"></div>
<div class="b" style="left:773.96px;top:440.25px;width:1.2px;height:162px;background:rgba(255,255,255,.15)"></div>
<div class="b" style="left:789.19px;top:440.25px;width:1.2px;height:162px;background:rgba(255,255,255,.15)"></div>
<div class="b" style="left:804.42px;top:440.25px;width:1.2px;height:162px;background:rgba(255,255,255,.15)"></div>
<div class="b" style="left:819.65px;top:440.25px;width:1.2px;height:162px;background:rgba(255,255,255,.15)"></div>
<div class="b" style="left:834.88px;top:440.25px;width:1.2px;height:162px;background:rgba(255,255,255,.15)"></div>
<div class="b" style="left:850.11px;top:440.25px;width:1.2px;height:162px;background:rgba(255,255,255,.15)"></div>
<div class="b" style="left:865.34px;top:440.25px;width:1.2px;height:162px;background:rgba(255,255,255,.15)"></div>
<div class="b" style="left:880.57px;top:440.25px;width:1.2px;height:162px;background:rgba(255,255,255,.15)"></div>
<div class="b" style="left:895.80px;top:440.25px;width:1.2px;height:162px;background:rgba(255,255,255,.15)"></div>
<div class="b" style="left:911.03px;top:440.25px;width:1.2px;height:162px;background:rgba(255,255,255,.15)"></div>
<div class="b" style="left:926.26px;top:440.25px;width:1.2px;height:162px;background:rgba(255,255,255,.15)"></div>
<div class="b" style="left:941.49px;top:440.25px;width:1.2px;height:162px;background:rgba(255,255,255,.15)"></div>
<div class="b" style="left:956.72px;top:440.25px;width:1.2px;height:162px;background:rgba(255,255,255,.15)"></div>
<div class="b" style="left:971.95px;top:440.25px;width:1.2px;height:162px;background:rgba(255,255,255,.15)"></div>
<div class="b" style="left:987.18px;top:440.25px;width:1.2px;height:162px;background:rgba(255,255,255,.15)"></div>
<div class="b" style="left:1002.41px;top:440.25px;width:1.2px;height:162px;background:rgba(255,255,255,.15)"></div>
<div class="b" style="left:1017.64px;top:440.25px;width:1.2px;height:162px;background:rgba(255,255,255,.15)"></div>
<div class="b" style="left:1032.87px;top:440.25px;width:1.2px;height:162px;background:rgba(255,255,255,.15)"></div>
<div class="b" style="left:1048.10px;top:440.25px;width:1.2px;height:162px;background:rgba(255,255,255,.15)"></div>
<div class="b" style="left:1063.33px;top:440.25px;width:1.2px;height:162px;background:rgba(255,255,255,.15)"></div>
<div class="b" style="left:1078.56px;top:440.25px;width:1.2px;height:162px;background:rgba(255,255,255,.15)"></div>
<div class="b" style="left:1093.79px;top:440.25px;width:1.2px;height:162px;background:rgba(255,255,255,.15)"></div>
<div class="b" style="left:1109.02px;top:440.25px;width:1.2px;height:162px;background:rgba(255,255,255,.15)"></div>
<div class="b" style="left:1124.25px;top:440.25px;width:1.2px;height:162px;background:rgba(255,255,255,.15)"></div>
<div class="b" style="left:1139.48px;top:440.25px;width:1.2px;height:162px;background:rgba(255,255,255,.15)"></div>
<div class="b" style="left:1154.71px;top:440.25px;width:1.2px;height:162px;background:rgba(255,255,255,.15)"></div>
<div class="b" style="left:1169.94px;top:440.25px;width:1.2px;height:162px;background:rgba(255,255,255,.15)"></div>
<div class="b" style="left:1185.17px;top:440.25px;width:1.2px;height:162px;background:rgba(255,255,255,.15)"></div>
<div class="b" style="left:1200.40px;top:440.25px;width:1.2px;height:162px;background:rgba(255,255,255,.15)"></div>
<div class="b" style="left:1215.63px;top:440.25px;width:1.2px;height:162px;background:rgba(255,255,255,.15)"></div>
<div class="b" style="left:1230.86px;top:440.25px;width:1.2px;height:162px;background:rgba(255,255,255,.15)"></div>
<div class="b" style="left:1246.09px;top:440.25px;width:1.2px;height:162px;background:rgba(255,255,255,.15)"></div>
<div class="b" style="left:1261.32px;top:440.25px;width:1.2px;height:162px;background:rgba(255,255,255,.15)"></div>
<div class="b" style="left:1276.55px;top:440.25px;width:1.2px;height:162px;background:rgba(255,255,255,.15)"></div>
<div class="b" style="left:1291.78px;top:440.25px;width:1.2px;height:162px;background:rgba(255,255,255,.15)"></div>
<div class="b" style="left:1307.01px;top:440.25px;width:1.2px;height:162px;background:rgba(255,255,255,.15)"></div>
<div class="b" style="left:1322.24px;top:440.25px;width:1.2px;height:162px;background:rgba(255,255,255,.15)"></div>
<div class="b" style="left:1337.47px;top:440.25px;width:1.2px;height:162px;background:rgba(255,255,255,.15)"></div>
<div class="b" style="left:1352.70px;top:440.25px;width:1.2px;height:162px;background:rgba(255,255,255,.15)"></div>
<div class="b" style="left:1367.93px;top:440.25px;width:1.2px;height:162px;background:rgba(255,255,255,.15)"></div>
<div class="b" style="left:1383.16px;top:440.25px;width:1.2px;height:162px;background:rgba(255,255,255,.15)"></div>
<div class="b" style="left:1398.39px;top:440.25px;width:1.2px;height:162px;background:rgba(255,255,255,.15)"></div>
<div class="b" style="left:1413.62px;top:440.25px;width:1.2px;height:162px;background:rgba(255,255,255,.15)"></div>
<div class="b" style="left:1428.85px;top:440.25px;width:1.2px;height:162px;background:rgba(255,255,255,.15)"></div>
<div class="b" style="left:606.43px;top:608.5px;width:1.2px;height:108px;background:rgba(255,255,255,.15)"></div>
<div class="b" style="left:621.66px;top:608.5px;width:1.2px;height:108px;background:rgba(255,255,255,.15)"></div>
<div class="b" style="left:636.89px;top:608.5px;width:1.2px;height:108px;background:rgba(255,255,255,.15)"></div>
<div class="b" style="left:652.12px;top:608.5px;width:1.2px;height:108px;background:rgba(255,255,255,.15)"></div>
<div class="b" style="left:667.35px;top:608.5px;width:1.2px;height:108px;background:rgba(255,255,255,.15)"></div>
<div class="b" style="left:682.58px;top:608.5px;width:1.2px;height:108px;background:rgba(255,255,255,.15)"></div>
<div class="b" style="left:697.81px;top:608.5px;width:1.2px;height:108px;background:rgba(255,255,255,.15)"></div>
<div class="b" style="left:713.04px;top:608.5px;width:1.2px;height:108px;background:rgba(255,255,255,.15)"></div>
<div class="b" style="left:728.27px;top:608.5px;width:1.2px;height:108px;background:rgba(255,255,255,.15)"></div>
<div class="b" style="left:743.50px;top:608.5px;width:1.2px;height:108px;background:rgba(255,255,255,.15)"></div>
<div class="b" style="left:758.73px;top:608.5px;width:1.2px;height:108px;background:rgba(255,255,255,.15)"></div>
<div class="b" style="left:773.96px;top:608.5px;width:1.2px;height:108px;background:rgba(255,255,255,.15)"></div>
<div class="b" style="left:789.19px;top:608.5px;width:1.2px;height:108px;background:rgba(255,255,255,.15)"></div>
<div class="b" style="left:804.42px;top:608.5px;width:1.2px;height:108px;background:rgba(255,255,255,.15)"></div>
<div class="b" style="left:819.65px;top:608.5px;width:1.2px;height:108px;background:rgba(255,255,255,.15)"></div>
<div class="b" style="left:834.88px;top:608.5px;width:1.2px;height:108px;background:rgba(255,255,255,.15)"></div>
<div class="b" style="left:850.11px;top:608.5px;width:1.2px;height:108px;background:rgba(255,255,255,.15)"></div>
<div class="b" style="left:865.34px;top:608.5px;width:1.2px;height:108px;background:rgba(255,255,255,.15)"></div>
<div class="b" style="left:880.57px;top:608.5px;width:1.2px;height:108px;background:rgba(255,255,255,.15)"></div>
<div class="b" style="left:895.80px;top:608.5px;width:1.2px;height:108px;background:rgba(255,255,255,.15)"></div>
<div class="b" style="left:911.03px;top:608.5px;width:1.2px;height:108px;background:rgba(255,255,255,.15)"></div>
<div class="b" style="left:926.26px;top:608.5px;width:1.2px;height:108px;background:rgba(255,255,255,.15)"></div>
<div class="b" style="left:941.49px;top:608.5px;width:1.2px;height:108px;background:rgba(255,255,255,.15)"></div>
<div class="b" style="left:956.72px;top:608.5px;width:1.2px;height:108px;background:rgba(255,255,255,.15)"></div>
<div class="b" style="left:971.95px;top:608.5px;width:1.2px;height:108px;background:rgba(255,255,255,.15)"></div>
<div class="b" style="left:987.18px;top:608.5px;width:1.2px;height:108px;background:rgba(255,255,255,.15)"></div>
<div class="b" style="left:1002.41px;top:608.5px;width:1.2px;height:108px;background:rgba(255,255,255,.15)"></div>
<div class="b" style="left:1017.64px;top:608.5px;width:1.2px;height:108px;background:rgba(255,255,255,.15)"></div>
<div class="b" style="left:1032.87px;top:608.5px;width:1.2px;height:108px;background:rgba(255,255,255,.15)"></div>
<div class="b" style="left:1048.10px;top:608.5px;width:1.2px;height:108px;background:rgba(255,255,255,.15)"></div>
<div class="b" style="left:1063.33px;top:608.5px;width:1.2px;height:108px;background:rgba(255,255,255,.15)"></div>
<div class="b" style="left:1078.56px;top:608.5px;width:1.2px;height:108px;background:rgba(255,255,255,.15)"></div>
<div class="b" style="left:1093.79px;top:608.5px;width:1.2px;height:108px;background:rgba(255,255,255,.15)"></div>
<div class="b" style="left:1109.02px;top:608.5px;width:1.2px;height:108px;background:rgba(255,255,255,.15)"></div>
<div class="b" style="left:1124.25px;top:608.5px;width:1.2px;height:108px;background:rgba(255,255,255,.15)"></div>
<div class="b" style="left:1139.48px;top:608.5px;width:1.2px;height:108px;background:rgba(255,255,255,.15)"></div>
<div class="b" style="left:1154.71px;top:608.5px;width:1.2px;height:108px;background:rgba(255,255,255,.15)"></div>
<div class="b" style="left:1169.94px;top:608.5px;width:1.2px;height:108px;background:rgba(255,255,255,.15)"></div>
<div class="b" style="left:1185.17px;top:608.5px;width:1.2px;height:108px;background:rgba(255,255,255,.15)"></div>
<div class="b" style="left:1200.40px;top:608.5px;width:1.2px;height:108px;background:rgba(255,255,255,.15)"></div>
<div class="b" style="left:1215.63px;top:608.5px;width:1.2px;height:108px;background:rgba(255,255,255,.15)"></div>
<div class="b" style="left:1230.86px;top:608.5px;width:1.2px;height:108px;background:rgba(255,255,255,.15)"></div>
<div class="b" style="left:1246.09px;top:608.5px;width:1.2px;height:108px;background:rgba(255,255,255,.15)"></div>
<div class="b" style="left:1261.32px;top:608.5px;width:1.2px;height:108px;background:rgba(255,255,255,.15)"></div>
<div class="b" style="left:1276.55px;top:608.5px;width:1.2px;height:108px;background:rgba(255,255,255,.15)"></div>
<div class="b" style="left:1291.78px;top:608.5px;width:1.2px;height:108px;background:rgba(255,255,255,.15)"></div>
<div class="b" style="left:1307.01px;top:608.5px;width:1.2px;height:108px;background:rgba(255,255,255,.15)"></div>
<div class="b" style="left:1322.24px;top:608.5px;width:1.2px;height:108px;background:rgba(255,255,255,.15)"></div>
<div class="b" style="left:1337.47px;top:608.5px;width:1.2px;height:108px;background:rgba(255,255,255,.15)"></div>
<div class="b" style="left:1352.70px;top:608.5px;width:1.2px;height:108px;background:rgba(255,255,255,.15)"></div>
<div class="b" style="left:1367.93px;top:608.5px;width:1.2px;height:108px;background:rgba(255,255,255,.15)"></div>
<div class="b" style="left:1383.16px;top:608.5px;width:1.2px;height:108px;background:rgba(255,255,255,.15)"></div>
<div class="b" style="left:1398.39px;top:608.5px;width:1.2px;height:108px;background:rgba(255,255,255,.15)"></div>
<div class="b" style="left:1413.62px;top:608.5px;width:1.2px;height:108px;background:rgba(255,255,255,.15)"></div>
<div class="b" style="left:1428.85px;top:608.5px;width:1.2px;height:108px;background:rgba(255,255,255,.15)"></div>
<div class="b" style="left:591.8px;top:342.5px;width:845.7px;height:1.7px;background:#343434;"></div>
<div class="b" style="left:591.8px;top:360.5px;width:845.7px;height:1.7px;background:#343434;"></div>
<div class="b" style="left:591.8px;top:378.5px;width:845.7px;height:1.7px;background:#343434;"></div>
<div class="b" style="left:591.8px;top:396.5px;width:845.7px;height:1.7px;background:#343434;"></div>
<div class="b" style="left:591.8px;top:414.5px;width:845.7px;height:1.7px;background:#343434;"></div>
<div class="b" style="left:591.8px;top:432.5px;width:845.7px;height:1.7px;background:#343434;"></div>
<div class="b" style="left:591.8px;top:456.75px;width:845.7px;height:1.7px;background:#343434;"></div>
<div class="b" style="left:591.8px;top:474.75px;width:845.7px;height:1.7px;background:#343434;"></div>
<div class="b" style="left:591.8px;top:492.75px;width:845.7px;height:1.7px;background:#343434;"></div>
<div class="b" style="left:591.8px;top:510.75px;width:845.7px;height:1.7px;background:#343434;"></div>
<div class="b" style="left:591.8px;top:528.75px;width:845.7px;height:1.7px;background:#343434;"></div>
<div class="b" style="left:591.8px;top:546.75px;width:845.7px;height:1.7px;background:#343434;"></div>
<div class="b" style="left:591.8px;top:564.75px;width:845.7px;height:1.7px;background:#343434;"></div>
<div class="b" style="left:591.8px;top:582.75px;width:845.7px;height:1.7px;background:#343434;"></div>
<div class="b" style="left:591.8px;top:600.75px;width:845.7px;height:1.7px;background:#343434;"></div>
<div class="b" style="left:591.8px;top:625.0px;width:845.7px;height:1.7px;background:#343434;"></div>
<div class="b" style="left:591.8px;top:643.0px;width:845.7px;height:1.7px;background:#343434;"></div>
<div class="b" style="left:591.8px;top:661.0px;width:845.7px;height:1.7px;background:#343434;"></div>
<div class="b" style="left:591.8px;top:679.0px;width:845.7px;height:1.7px;background:#343434;"></div>
<div class="b" style="left:591.8px;top:697.0px;width:845.7px;height:1.7px;background:#343434;"></div>
<div class="b" style="left:591.8px;top:715.0px;width:845.7px;height:1.7px;background:#343434;"></div>
<div class="b" style="left:591.8px;top:325.8px;width:845.7px;height:0.9px;background:#353535;"></div>
<div class="b" style="left:679.7px;top:345.5px;width:32px;height:12px;border-radius:6px;background:rgba(20,10,5,.5)"></div>
<div class="t" style="left:695.7px;top:345px;font-size:8.5px;line-height:13px;color:#f0f0f0;transform-origin:center center;transform:translateX(-50%) scaleX(0.86)">16:41</div>
<div class="b" style="left:679.7px;top:363.5px;width:32px;height:12px;border-radius:6px;background:rgba(20,10,5,.5)"></div>
<div class="t" style="left:695.7px;top:363px;font-size:8.5px;line-height:13px;color:#f0f0f0;transform-origin:center center;transform:translateX(-50%) scaleX(0.86)">16:41</div>
<div class="b" style="left:685.1px;top:363.5px;width:32px;height:12px;border-radius:6px;background:rgba(20,10,5,.5)"></div>
<div class="t" style="left:701.1px;top:363px;font-size:8.5px;line-height:13px;color:#f0f0f0;transform-origin:center center;transform:translateX(-50%) scaleX(0.86)">16:47</div>
<div class="b" style="left:685.1px;top:381.5px;width:32px;height:12px;border-radius:6px;background:rgba(20,10,5,.5)"></div>
<div class="t" style="left:701.1px;top:381px;font-size:8.5px;line-height:13px;color:#f0f0f0;transform-origin:center center;transform:translateX(-50%) scaleX(0.86)">16:47</div>
<div class="b" style="left:748.4px;top:399.5px;width:32px;height:12px;border-radius:6px;background:rgba(20,10,5,.5)"></div>
<div class="t" style="left:764.4px;top:399px;font-size:8.5px;line-height:13px;color:#f0f0f0;transform-origin:center center;transform:translateX(-50%) scaleX(0.86)">17:49</div>
<div class="b" style="left:748.4px;top:441.75px;width:32px;height:12px;border-radius:6px;background:rgba(20,10,5,.5)"></div>
<div class="t" style="left:764.4px;top:441.25px;font-size:8.5px;line-height:13px;color:#f0f0f0;transform-origin:center center;transform:translateX(-50%) scaleX(0.86)">17:49</div>
<div class="b" style="left:748.4px;top:459.75px;width:32px;height:12px;border-radius:6px;background:rgba(20,10,5,.5)"></div>
<div class="t" style="left:764.4px;top:459.25px;font-size:8.5px;line-height:13px;color:#f0f0f0;transform-origin:center center;transform:translateX(-50%) scaleX(0.86)">17:49</div>
<div class="b" style="left:748.4px;top:477.75px;width:32px;height:12px;border-radius:6px;background:rgba(20,10,5,.5)"></div>
<div class="t" style="left:764.4px;top:477.25px;font-size:8.5px;line-height:13px;color:#f0f0f0;transform-origin:center center;transform:translateX(-50%) scaleX(0.86)">17:49</div>
<div class="b" style="left:722.4px;top:495.75px;width:32px;height:12px;border-radius:6px;background:rgba(20,10,5,.5)"></div>
<div class="t" style="left:738.4px;top:495.25px;font-size:8.5px;line-height:13px;color:#f0f0f0;transform-origin:center center;transform:translateX(-50%) scaleX(0.86)">17:24</div>
<div class="b" style="left:722.4px;top:513.75px;width:32px;height:12px;border-radius:6px;background:rgba(20,10,5,.5)"></div>
<div class="t" style="left:738.4px;top:513.25px;font-size:8.5px;line-height:13px;color:#f0f0f0;transform-origin:center center;transform:translateX(-50%) scaleX(0.86)">17:24</div>
<div class="b" style="left:722.4px;top:531.75px;width:32px;height:12px;border-radius:6px;background:rgba(20,10,5,.5)"></div>
<div class="t" style="left:738.4px;top:531.25px;font-size:8.5px;line-height:13px;color:#f0f0f0;transform-origin:center center;transform:translateX(-50%) scaleX(0.86)">17:24</div>
<div class="b" style="left:722.4px;top:549.75px;width:32px;height:12px;border-radius:6px;background:rgba(20,10,5,.5)"></div>
<div class="t" style="left:738.4px;top:549.25px;font-size:8.5px;line-height:13px;color:#f0f0f0;transform-origin:center center;transform:translateX(-50%) scaleX(0.86)">17:24</div>
<div class="b" style="left:722.4px;top:567.75px;width:32px;height:12px;border-radius:6px;background:rgba(20,10,5,.5)"></div>
<div class="t" style="left:738.4px;top:567.25px;font-size:8.5px;line-height:13px;color:#f0f0f0;transform-origin:center center;transform:translateX(-50%) scaleX(0.86)">17:24</div>
<div class="b" style="left:685.1px;top:610.0px;width:32px;height:12px;border-radius:6px;background:rgba(20,10,5,.5)"></div>
<div class="t" style="left:701.1px;top:609.5px;font-size:8.5px;line-height:13px;color:#f0f0f0;transform-origin:center center;transform:translateX(-50%) scaleX(0.86)">16:47</div>
<div class="b" style="left:722.4px;top:628.0px;width:32px;height:12px;border-radius:6px;background:rgba(20,10,5,.5)"></div>
<div class="t" style="left:738.4px;top:627.5px;font-size:8.5px;line-height:13px;color:#f0f0f0;transform-origin:center center;transform:translateX(-50%) scaleX(0.86)">17:24</div>
<div class="b" style="left:685.1px;top:646.0px;width:32px;height:12px;border-radius:6px;background:rgba(20,10,5,.5)"></div>
<div class="t" style="left:701.1px;top:645.5px;font-size:8.5px;line-height:13px;color:#f0f0f0;transform-origin:center center;transform:translateX(-50%) scaleX(0.86)">16:47</div>
<div class="b" style="left:722.4px;top:664.0px;width:32px;height:12px;border-radius:6px;background:rgba(20,10,5,.5)"></div>
<div class="t" style="left:738.4px;top:663.5px;font-size:8.5px;line-height:13px;color:#f0f0f0;transform-origin:center center;transform:translateX(-50%) scaleX(0.86)">17:24</div>
<div class="b" style="left:722.4px;top:682.0px;width:32px;height:12px;border-radius:6px;background:rgba(20,10,5,.5)"></div>
<div class="t" style="left:738.4px;top:681.5px;font-size:8.5px;line-height:13px;color:#f0f0f0;transform-origin:center center;transform:translateX(-50%) scaleX(0.86)">17:24</div>
<div class="b" style="left:685.1px;top:700.0px;width:32px;height:12px;border-radius:6px;background:rgba(20,10,5,.5)"></div>
<div class="t" style="left:701.1px;top:699.5px;font-size:8.5px;line-height:13px;color:#f0f0f0;transform-origin:center center;transform:translateX(-50%) scaleX(0.86)">16:47</div>
<div class="t" style="left:423px;top:330.9px;width:24px;height:24px;"><div style="position:absolute;left:12px;top:12px;font-size:8px;line-height:10px;font-weight:700;color:#eeeeee;transform:translate(-50%,-50%) rotate(-90deg) scaleX(0.93);white-space:nowrap">Group 1</div></div>
<div class="t" style="left:423px;top:444.7px;width:24px;height:24px;"><div style="position:absolute;left:12px;top:12px;font-size:8px;line-height:10px;font-weight:700;color:#eeeeee;transform:translate(-50%,-50%) rotate(-90deg) scaleX(0.93);white-space:nowrap">Group 2</div></div>
<div class="t" style="left:423px;top:612.7px;width:24px;height:24px;"><div style="position:absolute;left:12px;top:12px;font-size:8px;line-height:10px;font-weight:700;color:#eeeeee;transform:translate(-50%,-50%) rotate(-90deg) scaleX(0.93);white-space:nowrap">Group 3</div></div>
<div class="b" style="left:713px;top:163px;width:2px;height:553px;background:#f0f0f0;"></div>
<div class="b" style="left:441px;top:248.5px;width:996.5px;height:4.5px;background:#252525;"></div>
<div class="b" style="left:441px;top:305.5px;width:996.5px;height:20.5px;background:#252525;"></div>
<div class="b" style="left:441px;top:434.2px;width:996.5px;height:6.2px;background:#252525;"></div>
<div class="b" style="left:441px;top:602.5px;width:996.5px;height:6.2px;background:#252525;"></div>
<div class="b" style="left:713px;top:188px;width:2px;height:2.5px;background:#333333;"></div>
<div class="b" style="left:713px;top:210px;width:2px;height:3.5px;background:#333333;"></div>
<div class="b" style="left:713px;top:302.8px;width:2px;height:2.7px;background:#333333;"></div>
</body></html>
